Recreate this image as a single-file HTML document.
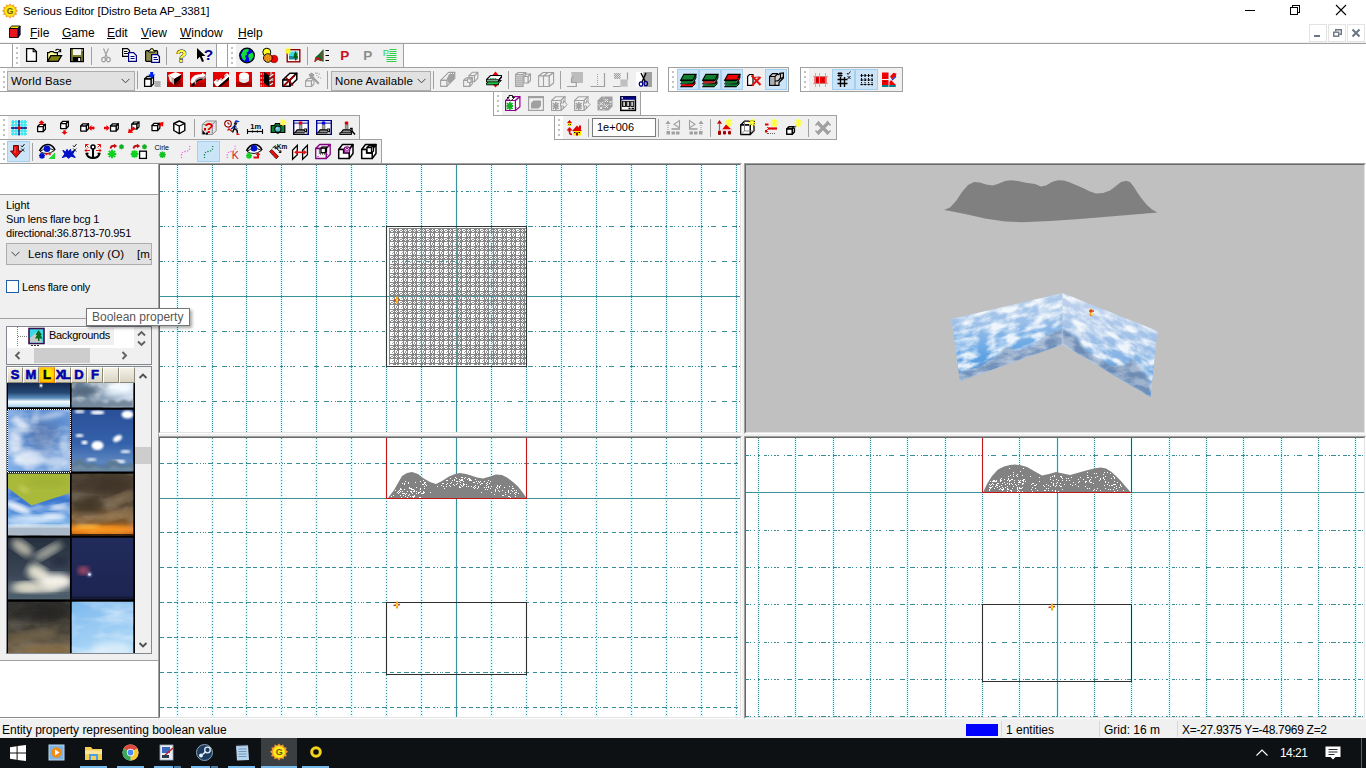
<!DOCTYPE html><html><head><meta charset="utf-8"><title>Serious Editor [Distro Beta AP_3381]</title><style>
*{box-sizing:border-box;margin:0;padding:0}
html,body{width:1366px;height:768px;overflow:hidden;background:#fff;font-family:"Liberation Sans",sans-serif;font-size:12px;color:#000}
.abs{position:absolute}
#root{position:absolute;left:0;top:0;width:1366px;height:768px;overflow:hidden;background:#fff}
.t{position:absolute;white-space:nowrap;line-height:1}
.tb{position:absolute;height:25px;border:1px solid #a0a0a0;background:#f0f0f0}
.tb .grip{position:absolute;left:0;top:0;width:8px;height:23px;background:#fff}
.tb .grip i{position:absolute;left:3px;width:2px;height:2px;background:#c2c2c2}
.btn{position:absolute;top:0;width:23px;height:23px}
.btn.on{background:#cce4f7;border:1px solid #a3cff1;top:1px;height:21px}
.btn svg{position:absolute;left:3px;top:4px;width:16px;height:16px;overflow:visible}
.btn.on svg{left:2px;top:2px}
.sep{position:absolute;top:3px;width:1px;height:18px;background:#a0a0a0}
.combo{position:absolute;background:#e1e1e1;border:1px solid #adadad}
.menu{position:absolute;top:26px;font-size:12px;line-height:14px;white-space:nowrap}
.menu u{text-decoration:underline;text-underline-offset:1px}
.vp{position:absolute;border-style:solid;border-width:2px;border-color:#696969 #fff #fff #696969;outline:0}
.vpo{position:absolute;background:#a0a0a0}
</style></head><body><div id="root">
<div class="abs" style="left:0;top:0;width:1366px;height:23px;background:#fff"></div>
<svg class="abs" style="left:2px;top:3px" width="16" height="16" viewBox="0 0 18 18"><polygon points="9,0.5 10.8,2.6 13.3,1.6 13.9,4.2 16.6,4.4 15.9,7 18,8.8 15.9,10.6 16.8,13.2 14.1,13.5 13.5,16.2 10.9,15.3 9,17.5 7.1,15.3 4.5,16.2 3.9,13.5 1.2,13.2 2.1,10.6 0,8.8 2.1,7 1.4,4.4 4.1,4.2 4.7,1.6 7.2,2.6" fill="#f29a2e"/><circle cx="9" cy="9" r="6.2" fill="#ffe818"/><circle cx="9" cy="9" r="6.2" fill="none" stroke="#f7c21a" stroke-width="1"/><text x="5.400" y="12.300" font-family="Liberation Sans, sans-serif" font-size="9.500" font-weight="bold" fill="#6b5a10">G</text></svg>
<div class="t" style="left:23px;top:6px;font-size:11.5px;letter-spacing:-0.06px">Serious Editor [Distro Beta AP_3381]</div>
<svg class="abs" style="left:1230px;top:0" width="136" height="23" viewBox="0 0 136 23" shape-rendering="crispEdges"><rect x="15" y="10" width="10" height="1" fill="#000"/><rect x="60.5" y="7.5" width="7" height="7" fill="none" stroke="#000" stroke-width="1"/><path d="M62.5 7.5 V5.5 H69.5 V12.5 H67.5" fill="none" stroke="#000" stroke-width="1"/><path d="M106 5 L116 15 M116 5 L106 15" stroke="#000" stroke-width="1.1" shape-rendering="geometricPrecision"/></svg>
<svg class="abs" style="left:9px;top:25px" width="12" height="14" viewBox="0 0 14 16"><polygon points="0.5,4 3,1 13,1 10.5,4" fill="#f5e400" stroke="#000" stroke-width="1"/><polygon points="10.5,4 13,1 13,11.5 10.5,14.5" fill="#0000c8" stroke="#000" stroke-width="1"/><rect x="0.5" y="4" width="10" height="10.5" fill="#e8141c" stroke="#000" stroke-width="1"/></svg>
<div class="menu" style="left:30px"><u>F</u>ile</div>
<div class="menu" style="left:62px"><u>G</u>ame</div>
<div class="menu" style="left:107px"><u>E</u>dit</div>
<div class="menu" style="left:141px"><u>V</u>iew</div>
<div class="menu" style="left:180px"><u>W</u>indow</div>
<div class="menu" style="left:238px"><u>H</u>elp</div>
<svg class="abs" style="left:1309px;top:24px" width="57" height="18" viewBox="0 0 57 18"><g fill="#fff" stroke="#e3e3e3"><rect x="0.5" y="0.5" width="17" height="17"/><rect x="19.5" y="0.5" width="17" height="17"/><rect x="38.5" y="0.5" width="17" height="17"/></g><rect x="5" y="11" width="6" height="2" fill="#6b7585"/><g fill="none" stroke="#6b7585" stroke-width="1.4"><rect x="24.7" y="8.2" width="5" height="4"/><path d="M26.7 7.5 V5.7 H32.3 V10.2 H30.4"/></g><path d="M43.5 5.5 L50.5 12.5 M50.5 5.5 L43.5 12.5" stroke="#6b7585" stroke-width="2"/></svg>
<div class="abs" style="left:0;top:42px;width:1366px;height:1px;background:#f0f0f0"></div>
<div class="abs" style="left:0;top:43px;width:1366px;height:1px;background:#a0a0a0"></div>
<div class="tb" style="left:12px;top:43px;width:205px"><div class="grip" style="width:7px"><i style="top:3px"></i><i style="top:8px"></i><i style="top:13px"></i><i style="top:18px"></i></div><div class="btn" style="left:7px;width:23px"><svg viewBox="0 0 16 16"><path d="M3.600 0.600 H10.400 L13.400 3.600 V13.400 H3.600 Z" fill="#fff" stroke="#000" stroke-width="1.300"/><path d="M10.200 0.600 V3.800 H13.400" fill="none" stroke="#000" stroke-width="1.100"/></svg></div><div class="btn" style="left:30px;width:23px"><svg viewBox="0 0 16 16"><path d="M9.500 2.500 q2.500 -2.600 4.700 0.300" stroke="#000" fill="none" stroke-width="1.100"/><path d="M14.600 1 V3.800 H12" stroke="#000" fill="none" stroke-width="1.100"/><path d="M1.600 13 V4.600 H3.200 L4.200 3.600 H7.200 L8.200 4.600 H11.400 V7.500" fill="#ffff9c" stroke="#000" stroke-width="1.200"/><path d="M1.600 13.400 L4.800 7.600 H15.600 L12.200 13.400 Z" fill="#808010" stroke="#000" stroke-width="1.200"/></svg></div><div class="btn" style="left:53px;width:23px"><svg viewBox="0 0 16 16"><rect x="1.600" y="0.600" width="12.800" height="13" fill="#80802c" stroke="#000" stroke-width="1.200"/><rect x="4" y="1.200" width="8" height="5.800" fill="#f4f4f4"/><rect x="3.800" y="9" width="8.400" height="4.600" fill="#000"/><rect x="9.200" y="10" width="2" height="3" fill="#fff"/><rect x="12.600" y="1.600" width="1" height="1.200" fill="#fff"/></svg></div><div class="sep" style="left:78px"></div><div class="btn" style="left:82px;width:23px"><svg viewBox="0 0 16 16"><g fill="none" stroke="#a0a0a0" stroke-width="1.200"><path d="M5.500 0.500 L9.300 9.500 M10.500 0.500 L6.700 9.500"/><ellipse cx="5.600" cy="11.600" rx="1.900" ry="2.200"/><ellipse cx="10.400" cy="11.600" rx="1.900" ry="2.200"/></g></svg></div><div class="btn" style="left:105px;width:23px"><svg viewBox="0 0 16 16"><path d="M1.600 0.600 H6.500 L8.500 2.600 V8.400 H1.600Z" fill="#fff" stroke="#000" stroke-width="1.200"/><path d="M3 3.500h3.500M3 5.500h4" stroke="#000"/><path d="M7.600 4.600 H12.500 L15.400 7.500 V13.400 H7.600Z" fill="#fff" stroke="#000080" stroke-width="1.200"/><path d="M9.500 8.500h4M9.500 10.500h4" stroke="#000080"/></svg></div><div class="btn" style="left:128px;width:23px"><svg viewBox="0 0 16 16"><rect x="1.600" y="2.600" width="12" height="10.800" rx="1" fill="#8c8c4c" stroke="#000" stroke-width="1.200"/><path d="M4.500 4 V2.500 H6 L6.600 0.800 H9 L9.600 2.500 H11 V4Z" fill="#ffff9c" stroke="#000" stroke-width="1"/><path d="M7.600 6.600 H13.500 L15.400 8.500 V14.400 H7.600Z" fill="#fff" stroke="#000080" stroke-width="1.300"/><path d="M9.500 9.500h3.500M9.500 11.500h4.500" stroke="#000080" stroke-width="1.200"/></svg></div><div class="sep" style="left:153px"></div><div class="btn" style="left:157px;width:23px"><svg viewBox="0 0 16 16"><text x="3.200" y="13.600" font-family="Liberation Sans, sans-serif" font-size="17" font-weight="bold" fill="#ffff40" stroke="#000" stroke-width="0.900" paint-order="stroke">?</text></svg></div><div class="btn" style="left:180px;width:23px"><svg viewBox="0 0 16 16"><path d="M1 0 V11.500 L3.800 8.800 L6 14 L8 13.200 L5.700 8 H9.500Z" fill="#000"/><text x="7.800" y="12.400" font-family="Liberation Sans, sans-serif" font-size="15.500" font-weight="bold" fill="#000090">?</text></svg></div></div>
<div class="tb" style="left:227px;top:43px;width:177px"><div class="grip" style="width:8px"><i style="top:3px"></i><i style="top:8px"></i><i style="top:13px"></i><i style="top:18px"></i></div><div class="btn" style="left:8px;width:23px"><svg viewBox="0 0 16 16"><circle cx="8" cy="7.500" r="7.300" fill="#0000e8" stroke="#000" stroke-width="1.200"/><path d="M4.500 2 Q7.500 0.500 10 1.500 L9 4 L7.500 4.500 L8 6.500 L6 8 L7 10.500 L5.500 13 L3 10 L2 6.500 Z" fill="#10e030"/><path d="M10 6 L13.500 4.500 L14.800 8 L12.500 12 L10.500 13.500 L10 10 L9 8 Z" fill="#10e030"/></svg></div><div class="btn" style="left:31px;width:23px"><svg viewBox="0 0 16 16"><circle cx="4.800" cy="4.200" r="4" fill="#ffff20" stroke="#000" stroke-width="1"/><circle cx="12" cy="11" r="3.800" fill="#f00000" stroke="#600" stroke-width="0.6"/><circle cx="5.800" cy="10" r="4.300" fill="#f8a020" stroke="#000" stroke-width="0.900"/><path d="M3 8h6M2.500 10h7M3 12h6" stroke="#e84010" stroke-width="1" stroke-dasharray="1 1"/></svg></div><div class="btn" style="left:54px;width:23px"><svg viewBox="0 0 16 16"><rect x="2.200" y="1.700" width="12.600" height="12.100" fill="#fff" stroke="#900000" stroke-width="1.400"/><rect x="4" y="3.500" width="9" height="4.500" fill="#40d8e8"/><rect x="4" y="8" width="9" height="3.500" fill="#208890"/><polygon points="10.500,3 8.500,7.500 9.500,7.500 8.300,10 10,10 10,12 11.200,12 11.200,10 12.800,10 11.600,7.500 12.600,7.500" fill="#006000"/><rect x="10" y="11" width="1.400" height="1.500" fill="#c00000"/><path d="M3 -0.500v7M-0.500 3h7M0.600 0.600l4.800 4.800M5.400 0.600l-4.800 4.800" stroke="#ffff20" stroke-width="1.200"/></svg></div><div class="sep" style="left:79px"></div><div class="btn" style="left:83px;width:23px"><svg viewBox="0 0 16 16"><polygon points="1,9.500 5,6 9.500,1 9.500,14 5,11.500 2,13" fill="#007030"/><polygon points="6,6 9.500,2 9.500,13.500 7,11" fill="#805030" opacity="0.7"/><path d="M1 14 Q1.500 9.500 4 10 Q5 12.500 7.500 12.500" stroke="#d01010" stroke-width="1.500" fill="none"/><path d="M11.500 2.500h3.500M11.500 7.500h3.500M11.500 12.500h3.500" stroke="#000" stroke-width="1.100"/></svg></div><div class="btn" style="left:106px;width:23px"><svg viewBox="0 0 16 16"><text x="3.300" y="12" font-family="Liberation Sans, sans-serif" font-size="13.500" font-weight="bold" fill="#c81018">P</text></svg></div><div class="btn" style="left:129px;width:23px"><svg viewBox="0 0 16 16"><text x="3.300" y="12" font-family="Liberation Sans, sans-serif" font-size="13.500" font-weight="bold" fill="#8c8c8c">P</text></svg></div><div class="btn" style="left:152px;width:23px"><svg viewBox="0 0 16 16"><text x="-0.300" y="8.200" font-family="Liberation Sans, sans-serif" font-size="9.500" fill="#30d048">P</text><path d="M6.500 1.500h7M6.500 3.500h7M6.500 5.500h7M3.500 7.500h10M3.500 9.500h10M3.500 11.500h10M3.500 13.500h10" stroke="#30d048" stroke-width="1.200"/></svg></div></div>
<div class="tb" style="left:-1px;top:67px;width:659px"><div class="grip" style="width:7px"><i style="top:3px"></i><i style="top:8px"></i><i style="top:13px"></i><i style="top:18px"></i></div><div class="combo" style="left:7px;top:3px;width:128px;height:20px"><span class="t" style="left:3px;top:4px;font-size:11.5px;letter-spacing:0.15px">World Base</span><svg class="abs" style="right:4px;top:6px" width="9" height="6" viewBox="0 0 9 6"><path d="M0.5 0.8 L4.5 4.8 L8.5 0.8" fill="none" stroke="#404040" stroke-width="1"/></svg></div><div class="sep" style="left:137px"></div><div class="btn" style="left:141px;width:23px"><svg viewBox="0 0 16 16"><g fill="#fff" stroke="#000" stroke-width="1.3" stroke-linejoin="round"><polygon points="0.6,7 3.1,4.5 9.5,4.5 7.0,7"/><polygon points="7.0,7 9.5,4.5 9.5,11.9 7.0,14.4"/><rect x="0.6" y="7" width="6.4" height="7.4"/></g><polygon points="6.200,0 9.200,0 9.200,2.600 11.200,2.600 7.700,6.400 4.200,2.600 6.200,2.600" fill="#0020f0"/><rect x="10.500" y="9" width="6" height="6" fill="#d0d0d0"/><path d="M10.500 9.500h6M10.500 11.500h6M10.500 13.500h6" stroke="#909090" stroke-dasharray="1 1"/><path d="M11.500 10.500h5M11.500 12.500h5M11.500 14.500h5" stroke="#909090" stroke-dasharray="1 1"/></svg></div><div class="btn" style="left:164px;width:23px"><svg viewBox="0 0 16 16"><rect x="0" y="0" width="16" height="15" fill="#e40000"/><rect x="0" y="10.500" width="16" height="4.500" fill="#b00000"/><polygon points="1.200,3 8.500,0 14.800,2.600 7.200,7" fill="#fff"/><polygon points="1.200,3 7.200,7 7.200,13 3,9" fill="#b0b0b0"/><polygon points="1.200,3 4.500,5.200 4.500,10.500 3,9" fill="#f0f0f0"/><polygon points="7.200,7 14.800,2.600 13,7.500 7.200,13" fill="#000"/><polygon points="7.200,13 13,7.500 14,10 9,14.500" fill="#800000"/></svg></div><div class="btn" style="left:187px;width:23px"><svg viewBox="0 0 16 16"><rect x="0" y="0" width="16" height="15" fill="#e40000"/><rect x="0" y="10.500" width="16" height="4.500" fill="#b00000"/><path d="M0.500 10 Q1 3.500 8 2.500 L12 2 L12 0.500 L16 3 L12.500 6 L12.500 4.800 Q6 5 4.500 10 L2 12Z" fill="#fff"/><path d="M2 12 L4.500 10 L5 13 L2.500 14.500Z" fill="#000"/><path d="M4.500 10 Q6 5 12.500 4.800 L12.500 6 L16 3 V5.500 L12.500 8 Q7 8 5 13Z" fill="#a8a8a8"/><path d="M6 9 Q8 6.500 12.500 6.500 V8 Q8 8 6.500 11Z" fill="#000"/></svg></div><div class="btn" style="left:210px;width:23px"><svg viewBox="0 0 16 16"><rect x="0" y="0" width="16" height="15" fill="#e40000"/><rect x="0" y="10.500" width="16" height="4.500" fill="#b00000"/><polygon points="0.500,10 4,7 5.500,8.500 8,6 9.500,7.500 12,5 11,3.500 14,1 16,3 16,5 5,14.500 3,14" fill="#fff"/><polygon points="4,7 5.500,8.500 5,10 3,9" fill="#b0b0b0"/><polygon points="8,6 9.500,7.500 9,9 7,8" fill="#b0b0b0"/><polygon points="12,5 11,3.500 13,2 14,3.500" fill="#b0b0b0"/><polygon points="5,14.500 16,5 16,8 7,15" fill="#000"/></svg></div><div class="btn" style="left:233px;width:23px"><svg viewBox="0 0 16 16"><rect x="0" y="0" width="16" height="15" fill="#e40000"/><rect x="0" y="10.500" width="16" height="4.500" fill="#b00000"/><path d="M3 4 A5 3.600 0 0 1 13 4 V7.500 A5 3.600 0 0 1 3 7.500Z" fill="#d8d8d8"/><ellipse cx="8" cy="4" rx="5" ry="3.600" fill="#fff"/><ellipse cx="8" cy="11.500" rx="5" ry="2" fill="#900000"/><path d="M3 7.500 A5 3.600 0 0 0 13 7.500 V4.500 A5 3.600 0 0 1 3 4.500" fill="#e8e8e8"/></svg></div><div class="btn" style="left:256px;width:23px"><svg viewBox="0 0 16 16"><rect x="1" y="0" width="15" height="15" fill="#e40000"/><polygon points="5,0 10,3.500 10,15 5,11" fill="#000"/><path d="M1.500 2h3M1.500 6h3M1.500 10h3M1.500 13.500h3" stroke="#b0b0b0" stroke-width="2" stroke-dasharray="1.500 1"/><polygon points="10,3.500 15,0.500 15,5 12,7 15,9 15,13 10,15" fill="#901010"/><path d="M10.500 5 L14.500 2 M10.500 9 L13.500 7 M11 13 L14 11" stroke="#f0f0f0" stroke-width="1.400"/><path d="M12 0v3M13.500 6v3" stroke="#b0b0b0" stroke-width="1.500"/></svg></div><div class="btn" style="left:279px;width:23px"><svg viewBox="0 0 16 16"><g fill="#fff" stroke="#000" stroke-width="1.5" stroke-linejoin="round"><polygon points="0.8,8 7.8,1.2000000000000002 14.8,1.2000000000000002 7.8,8"/><polygon points="7.8,8 14.8,1.2000000000000002 14.8,7.500000000000001 7.8,14.3"/><rect x="0.8" y="8" width="7" height="6.3"/></g><path d="M1.500 14 L12.500 3.500" stroke="#900000" stroke-width="1.800"/><path d="M4 5.500 L11 13.500" stroke="#900000" stroke-width="1.500"/></svg></div><div class="btn" style="left:302px;width:23px"><svg viewBox="0 0 16 16"><g fill="#f0f0f0" stroke="#a0a0a0" stroke-width="1.1" stroke-linejoin="round"><polygon points="0.6,9 3.1,6.5 8.899999999999999,6.5 6.3999999999999995,9"/><polygon points="6.3999999999999995,9 8.899999999999999,6.5 8.899999999999999,12.0 6.3999999999999995,14.5"/><rect x="0.6" y="9" width="5.8" height="5.5"/></g><path d="M3.500 2.500 L6.500 0.500 L9.500 2.500 L8.500 4.500 L14.500 11 L13 12.500 L6.800 6 L5.500 6.500Z" fill="#a0a0a0"/><path d="M10 1h1M12 0.500v1.500M13.500 2h1.500M11.500 3.500h1M13.500 4.500v1.500M15 6h1" stroke="#a0a0a0" stroke-width="1.200"/></svg></div><div class="sep" style="left:327px"></div><div class="combo" style="left:331px;top:3px;width:100px;height:20px"><span class="t" style="left:3px;top:4px;font-size:11.5px;letter-spacing:0.1px">None Available</span><svg class="abs" style="right:4px;top:6px" width="9" height="6" viewBox="0 0 9 6"><path d="M0.5 0.8 L4.5 4.8 L8.5 0.8" fill="none" stroke="#404040" stroke-width="1"/></svg></div><div class="sep" style="left:433px"></div><div class="btn" style="left:437px;width:23px"><svg viewBox="0 0 16 16"><g fill="#f0f0f0" stroke="#a0a0a0" stroke-width="1.1" stroke-linejoin="round"><polygon points="0.6,8.4 8.6,0.40000000000000036 14.8,0.40000000000000036 6.8,8.4"/><polygon points="6.8,8.4 14.8,0.40000000000000036 14.8,6.4 6.8,14.4"/><rect x="0.6" y="8.4" width="6.2" height="6"/></g><polygon points="6.800,6.500 9.500,1.500 14.800,0.400 14.800,6.400 9,12" fill="#a0a0a0"/><path d="M9 1.500h1M11 1.500h1M13 1.500h1" stroke="#f0f0f0"/></svg></div><div class="btn" style="left:460px;width:23px"><svg viewBox="0 0 16 16"><g fill="#f0f0f0" stroke="#a0a0a0" stroke-width="1.1" stroke-linejoin="round"><polygon points="0.6,8.4 3.1,5.9 9.3,5.9 6.8,8.4"/><polygon points="6.8,8.4 9.3,5.9 9.3,11.9 6.8,14.4"/><rect x="0.6" y="8.4" width="6.2" height="6"/></g><g fill="#f0f0f0" stroke="#a0a0a0" stroke-width="1.1" stroke-linejoin="round"><polygon points="6,3.6 9.3,0.30000000000000027 14.8,0.30000000000000027 11.5,3.6"/><polygon points="11.5,3.6 14.8,0.30000000000000027 14.8,6.3 11.5,9.6"/><rect x="6" y="3.6" width="5.5" height="6"/></g><g fill="#f0f0f0" stroke="#a0a0a0" stroke-width="1" stroke-linejoin="round"><polygon points="4.5,7 6.0,5.5 9.5,5.5 8.0,7"/><polygon points="8.0,7 9.5,5.5 9.5,9.0 8.0,10.5"/><rect x="4.5" y="7" width="3.5" height="3.5"/></g></svg></div><div class="btn" style="left:483px;width:23px"><svg viewBox="0 0 16 16"><polygon points="9.500,-0.500 12.500,3 6.500,3" fill="#f00000"/><rect x="8.300" y="2" width="2.400" height="2.500" fill="#f00000"/><polygon points="9.500,15.500 12.500,12 6.500,12" fill="#f00000"/><rect x="8.300" y="10.500" width="2.400" height="2.500" fill="#f00000"/><polygon points="0.600,11 4,8.500 15.400,8.500 12.500,11 12.500,12.800 0.600,12.800" fill="#20c040" stroke="#000" stroke-width="0.900"/><polygon points="0.600,7.500 4.500,3.500 15.400,3.500 15.400,5.500 12.500,8.500 12.500,9.800 0.600,9.800" fill="#fff" stroke="#000" stroke-width="1.100"/><path d="M1 7.700 H12.500 L15.400 4.500" fill="none" stroke="#000" stroke-width="0.900"/><path d="M4 6.500h7" stroke="#20a040" stroke-width="1.200" stroke-dasharray="1.500 0.800"/><path d="M1.500 9h10.500" stroke="#208040" stroke-width="1"/></svg></div><div class="sep" style="left:508px"></div><div class="btn" style="left:512px;width:23px"><svg viewBox="0 0 16 16"><rect x="0.600" y="2.500" width="7.500" height="12" fill="#d4d4d4" stroke="#a0a0a0" stroke-width="1.100"/><path d="M0.600 2.500 L3 0.500 H10.500 L8 2.500 M10.500 0.500 V3" fill="none" stroke="#a0a0a0" stroke-width="1.100"/><path d="M2 4v10M4 4v10M6 4v10" stroke="#a0a0a0" stroke-dasharray="1 1"/><path d="M3 3.500v10M5 3.500v10M7 3.500v10" stroke="#a0a0a0" stroke-dasharray="1 1" stroke-dashoffset="1"/><g fill="#f0f0f0" stroke="#a0a0a0" stroke-width="1.1" stroke-linejoin="round"><polygon points="9,4.5 11.5,2.0 15.5,2.0 13,4.5"/><polygon points="13,4.5 15.5,2.0 15.5,8.5 13,11.0"/><rect x="9" y="4.5" width="4" height="6.5"/></g></svg></div><div class="btn" style="left:535px;width:23px"><svg viewBox="0 0 16 16"><g fill="#f0f0f0" stroke="#a0a0a0" stroke-width="1.1" stroke-linejoin="round"><polygon points="0.6,4 5.1,0.5 15.6,0.5 11.1,4"/><polygon points="11.1,4 15.6,0.5 15.6,11.0 11.1,14.5"/><rect x="0.6" y="4" width="10.5" height="10.5"/></g><path d="M5.500 4 V14.500 M5.500 4 L10 0.500" stroke="#a0a0a0" stroke-width="1.100"/></svg></div><div class="sep" style="left:560px"></div><div class="btn" style="left:564px;width:23px"><svg viewBox="0 0 16 16"><rect x="4.5" y="0" width="11.5" height="11" fill="#d8d8d8"/><path d="M4.5 0.5h11.5" stroke="#a0a0a0" stroke-dasharray="1 1"/><path d="M5.5 1.5h10.5" stroke="#a0a0a0" stroke-dasharray="1 1"/><path d="M4.5 2.5h11.5" stroke="#a0a0a0" stroke-dasharray="1 1"/><path d="M5.5 3.5h10.5" stroke="#a0a0a0" stroke-dasharray="1 1"/><path d="M4.5 4.5h11.5" stroke="#a0a0a0" stroke-dasharray="1 1"/><path d="M5.5 5.5h10.5" stroke="#a0a0a0" stroke-dasharray="1 1"/><path d="M4.5 6.5h11.5" stroke="#a0a0a0" stroke-dasharray="1 1"/><path d="M5.5 7.5h10.5" stroke="#a0a0a0" stroke-dasharray="1 1"/><path d="M4.5 8.5h11.5" stroke="#a0a0a0" stroke-dasharray="1 1"/><path d="M5.5 9.5h10.5" stroke="#a0a0a0" stroke-dasharray="1 1"/><path d="M4.5 10.5h11.5" stroke="#a0a0a0" stroke-dasharray="1 1"/><path d="M0 14.500 H9.300 V10.500 H4.500 V6.500 L6.500 5" fill="none" stroke="#a0a0a0" stroke-width="1.200"/></svg></div><div class="btn" style="left:587px;width:23px"><svg viewBox="0 0 16 16"><path d="M0.500 14.500 H14.500 V1" fill="none" stroke="#a0a0a0" stroke-width="1.200"/><path d="M7.500 2 V13" stroke="#a0a0a0" stroke-dasharray="1 1"/></svg></div><div class="btn" style="left:610px;width:23px"><svg viewBox="0 0 16 16"><rect x="1" y="1" width="6.5" height="6" fill="#d8d8d8"/><path d="M1 1.5h6.5" stroke="#a0a0a0" stroke-dasharray="1 1"/><path d="M2 2.5h5.5" stroke="#a0a0a0" stroke-dasharray="1 1"/><path d="M1 3.5h6.5" stroke="#a0a0a0" stroke-dasharray="1 1"/><path d="M2 4.5h5.5" stroke="#a0a0a0" stroke-dasharray="1 1"/><path d="M1 5.5h6.5" stroke="#a0a0a0" stroke-dasharray="1 1"/><path d="M2 6.5h5.5" stroke="#a0a0a0" stroke-dasharray="1 1"/><rect x="7.5" y="7.5" width="7" height="7" fill="#d8d8d8"/><path d="M7.5 8.0h7" stroke="#a0a0a0" stroke-dasharray="1 1"/><path d="M8.5 9.0h6" stroke="#a0a0a0" stroke-dasharray="1 1"/><path d="M7.5 10.0h7" stroke="#a0a0a0" stroke-dasharray="1 1"/><path d="M8.5 11.0h6" stroke="#a0a0a0" stroke-dasharray="1 1"/><path d="M7.5 12.0h7" stroke="#a0a0a0" stroke-dasharray="1 1"/><path d="M8.5 13.0h6" stroke="#a0a0a0" stroke-dasharray="1 1"/><path d="M7.5 14.0h7" stroke="#a0a0a0" stroke-dasharray="1 1"/><path d="M0 14.500 H7.500 M14.500 0.500 V7.500" fill="none" stroke="#a0a0a0" stroke-width="1.200"/></svg></div><div class="btn" style="left:633px;width:23px"><svg viewBox="0 0 16 16"><rect x="0" y="0" width="7.500" height="15" fill="#fff"/><rect x="7.500" y="0" width="8.500" height="15" fill="#a0a0a0"/><path d="M5 1 L9.500 10 M10 1 L6 10" stroke="#000" stroke-width="1.400" fill="none"/><ellipse cx="5" cy="12" rx="1.700" ry="2.200" fill="none" stroke="#000080" stroke-width="1.300"/><ellipse cx="9.800" cy="11.500" rx="1.700" ry="2.200" fill="none" stroke="#000080" stroke-width="1.300"/></svg></div></div>
<div class="tb" style="left:668px;top:67px;width:121px"><div class="grip" style="width:8px"><i style="top:3px"></i><i style="top:8px"></i><i style="top:13px"></i><i style="top:18px"></i></div><div class="btn on" style="left:8px;width:22px"><svg viewBox="0 0 16 16"><g transform="translate(8 8.600) scale(1.170 1.200) translate(-8 -8.700)"><polygon points="2,13.500 12,13.500 14,11.500 14,10" fill="#f00000" stroke="#000" stroke-width="0.800"/><rect x="2" y="11.700" width="10" height="1.800" fill="#f00000"/><path d="M1.300 11.300h11 M1.300 13.800h10.500" stroke="#000" stroke-width="0.900"/><rect x="2" y="9" width="10" height="2" fill="#108030"/><path d="M1.300 8.700h11" stroke="#000" stroke-width="0.900"/><path d="M12.300 11.300 L14.300 9" stroke="#000" stroke-width="0.800"/><polygon points="1.800,8.300 4.500,3.500 14.800,3.500 12.300,8.300" fill="#108030" stroke="#000" stroke-width="0.900"/><path d="M12.300 8.300 L14.800 3.500 V6.500 L12.300 11" fill="#108030" stroke="#000" stroke-width="0.800"/></g></svg></div><div class="btn on" style="left:30px;width:22px"><svg viewBox="0 0 16 16"><g transform="translate(8 8.600) scale(1.170 1.200) translate(-8 -8.700)"><polygon points="2,13.500 12,13.500 14,11.500 14,10" fill="#108030" stroke="#000" stroke-width="0.800"/><rect x="2" y="11.700" width="10" height="1.800" fill="#108030"/><path d="M1.300 11.300h11 M1.300 13.800h10.500" stroke="#000" stroke-width="0.900"/><rect x="2" y="9" width="10" height="2" fill="#c02828"/><path d="M1.300 8.700h11" stroke="#000" stroke-width="0.900"/><path d="M12.300 11.300 L14.300 9" stroke="#000" stroke-width="0.800"/><polygon points="1.800,8.300 4.500,3.500 14.800,3.500 12.300,8.300" fill="#108030" stroke="#000" stroke-width="0.900"/><path d="M12.300 8.300 L14.800 3.500 V6.500 L12.300 11" fill="#108030" stroke="#000" stroke-width="0.800"/></g></svg></div><div class="btn on" style="left:52px;width:22px"><svg viewBox="0 0 16 16"><g transform="translate(8 8.600) scale(1.170 1.200) translate(-8 -8.700)"><polygon points="2,13.500 12,13.500 14,11.500 14,10" fill="#108030" stroke="#000" stroke-width="0.800"/><rect x="2" y="11.700" width="10" height="1.800" fill="#108030"/><path d="M1.300 11.300h11 M1.300 13.800h10.500" stroke="#000" stroke-width="0.900"/><rect x="2" y="9" width="10" height="2" fill="#108030"/><path d="M1.300 8.700h11" stroke="#000" stroke-width="0.900"/><path d="M12.300 11.300 L14.300 9" stroke="#000" stroke-width="0.800"/><polygon points="1.800,8.300 4.500,3.500 14.800,3.500 12.300,8.300" fill="#f00000" stroke="#000" stroke-width="0.900"/><path d="M12.300 8.300 L14.800 3.500 V6.500 L12.300 11" fill="#f00000" stroke="#000" stroke-width="0.800"/></g></svg></div><div class="btn" style="left:74px;width:22px"><svg viewBox="0 0 16 16"><path d="M1.600 4.500 L3.500 2.500 H7 V13.400 H1.600Z" fill="#fff" stroke="#000" stroke-width="1.200"/><path d="M5.500 3.500 L14.500 13 M14.500 5 L6 13.500" stroke="#e01010" stroke-width="2"/><path d="M7 5.500l6 -0.500" stroke="#e01010" stroke-width="1"/></svg></div><div class="btn on" style="left:96px;width:22px"><svg viewBox="0 0 16 16"><path d="M1.600 4.500 L4.500 1.600 H9.500 Q10 4 12 1.200 L15.400 0.800 V6 L11 10.500 V13.400 H1.600Z" fill="#d4d4d4" stroke="#000" stroke-width="1.200"/><path d="M1.600 4.500 H7 V13.400 M7 4.500 L9.800 1.600 M7 9 Q11.500 9.500 12.500 5.500 Q13 7.500 15 5 M12.500 1.500v4" fill="none" stroke="#000" stroke-width="1.100"/><path d="M2.500 6h4M2.500 8h4M2.500 10h4M2.500 12h4" stroke="#808080" stroke-dasharray="1 1"/><path d="M3.500 7h3M3.500 9h3M3.500 11h3" stroke="#808080" stroke-dasharray="1 1"/></svg></div></div>
<div class="tb" style="left:800px;top:67px;width:103px"><div class="grip" style="width:8px"><i style="top:3px"></i><i style="top:8px"></i><i style="top:13px"></i><i style="top:18px"></i></div><div class="btn" style="left:8px;width:23px"><svg viewBox="0 0 16 16"><rect x="2.500" y="4" width="4.500" height="8" fill="#f00000"/><rect x="8" y="4" width="6.500" height="8" fill="#f00000"/><path d="M1 4.500h15M1 11.500h15M3.500 1v14M7.500 1v14M13.500 1v14" stroke="#c89898" stroke-width="0.800"/><rect x="4.500" y="6" width="1" height="4" fill="#900000"/><rect x="10.500" y="7" width="1" height="2" fill="#900000"/></svg></div><div class="btn on" style="left:31px;width:23px"><svg viewBox="0 0 16 16"><path d="M2.500 7.500h10M2.500 11.500h10M5.500 5v10M9.500 5v10" stroke="#000" stroke-width="1.400"/><path d="M2.500 1.500h5M2.500 3.500h5M4 0v5M6 0v5" stroke="#000" stroke-width="1"/><path d="M12 1 L13 2.500 L15.500 -0.500 M12.500 4 L15.500 7 M15.500 4 L12.500 7" stroke="#000" stroke-width="0.900" fill="none"/></svg></div><div class="btn on" style="left:54px;width:23px"><svg viewBox="0 0 16 16"><path d="M2.500 3.500h12M2.500 8h12M2.500 12.500h12" stroke="#000" stroke-width="1" stroke-dasharray="1 1"/><path d="M3.500 2v12M7 2v12M10.500 2v12M14 2v12" stroke="#000" stroke-width="1" stroke-dasharray="1 1"/><path d="M3 3.500h1.500M6.500 3.500h1.500M10 3.500h1.500M13.500 3.500h1.500M3 8h1.500M6.500 8h1.500M10 8h1.500M13.500 8h1.500M3 12.500h1.500M6.500 12.500h1.500M10 12.500h1.500M13.500 12.500h1.500" stroke="#000" stroke-width="1.400"/></svg></div><div class="btn" style="left:77px;width:23px"><svg viewBox="0 0 16 16"><rect x="1" y="0.500" width="6.500" height="6.500" fill="#f00000"/><rect x="1" y="8" width="6.500" height="5" fill="#f00000"/><rect x="1" y="13" width="6.500" height="2" fill="#008088"/><polygon points="8.500,15 8.500,10 10,8 12,10 14.500,12.500 14.500,15" fill="#f00000"/><rect x="8.500" y="13" width="6" height="2" fill="#008088"/><polygon points="9,4.500 12.500,0.800 15.500,1.800 15,3.500 11.500,7" fill="#f00000"/><polygon points="9,4.500 11.500,7 15,3.500 15.200,5 11.500,8.500" fill="#0030c0"/><rect x="3.500" y="5" width="1.500" height="1" fill="#800000"/><rect x="3.500" y="9" width="1.500" height="1" fill="#800000"/></svg></div></div>
<div class="tb" style="left:493px;top:91px;width:148px"><div class="grip" style="width:8px"><i style="top:3px"></i><i style="top:8px"></i><i style="top:13px"></i><i style="top:18px"></i></div><div class="btn" style="left:8px;width:23px"><svg viewBox="0 0 16 16"><g fill="#fff" stroke="#900090" stroke-width="1.2" stroke-linejoin="round"><polygon points="0.6,4.5 5.1,0.7000000000000002 14.9,0.7000000000000002 10.4,4.5"/><polygon points="10.4,4.5 14.9,0.7000000000000002 14.9,10.7 10.4,14.5"/><rect x="0.6" y="4.5" width="9.8" height="10"/></g><polygon points="4,-0.500 7.500,-0.500 7.500,1.500 9.500,1.500 5.800,5 2,1.500 4,1.500" fill="#fff" stroke="#000" stroke-width="0.900"/><path d="M2 7l5.500 6M7.500 7l-5.500 6M4.800 6v8M1.500 10h6.500" stroke="#10b020" stroke-width="1.800"/><circle cx="11" cy="11.500" r="0.600" fill="#900090"/></svg></div><div class="btn" style="left:31px;width:23px"><svg viewBox="0 0 16 16"><rect x="0.600" y="0.600" width="14.800" height="13.800" fill="none" stroke="#a0a0a0" stroke-width="1.200"/><path d="M1 1.500h14" stroke="#a0a0a0" stroke-width="1.400"/><polygon points="3,7 5.500,4.500 13,4.500 13,10 10.500,12.500 3,12.500" fill="#a0a0a0"/></svg></div><div class="btn" style="left:54px;width:23px"><svg viewBox="0 0 16 16"><g fill="#f0f0f0" stroke="#a0a0a0" stroke-width="1.1" stroke-linejoin="round"><polygon points="0.6,4.5 4.6,0.7000000000000002 14.0,0.7000000000000002 10.0,4.5"/><polygon points="10.0,4.5 14.0,0.7000000000000002 14.0,10.7 10.0,14.5"/><rect x="0.6" y="4.5" width="9.4" height="10"/></g><path d="M2 7l5.500 6M7.500 7l-5.500 6M4.800 6v8M1.500 10h6.500" stroke="#a0a0a0" stroke-width="1.600"/><polygon points="9.500,7 12.500,7 12.500,4.500 16,8.500 12.500,12.500 12.500,10 9.500,10" fill="#f0f0f0" stroke="#a0a0a0" stroke-width="1"/></svg></div><div class="btn" style="left:77px;width:23px"><svg viewBox="0 0 16 16"><g fill="#f0f0f0" stroke="#a0a0a0" stroke-width="1.1" stroke-linejoin="round"><polygon points="0.6,4.5 4.6,0.7000000000000002 14.0,0.7000000000000002 10.0,4.5"/><polygon points="10.0,4.5 14.0,0.7000000000000002 14.0,10.7 10.0,14.5"/><rect x="0.6" y="4.5" width="9.4" height="10"/></g><path d="M2 7l5.500 6M7.500 7l-5.500 6M4.800 6v8M1.500 10h6.500" stroke="#a0a0a0" stroke-width="1.600"/><polygon points="9.500,7 12.500,7 12.500,4.500 16,8.500 12.500,12.500 12.500,10 9.500,10" fill="#f0f0f0" stroke="#a0a0a0" stroke-width="1"/></svg></div><div class="btn" style="left:100px;width:23px"><svg viewBox="0 0 16 16"><polygon points="0.500,4.500 4.500,0.500 15.500,0.500 15.500,10.500 11.500,14.500 0.500,14.500" fill="#a0a0a0"/><path d="M2.500 6l3.500 3.500M6 6l-3.500 3.500M8 3l3 3M11 3l-3 3M2.500 10.500l3 3M5.500 10.500l-3 3M8 9l3 3M11 9l-3 3M12.500 5l2 2M14.500 5l-2 2" stroke="#e8e8e8" stroke-width="1"/><path d="M7 1v13M1 8.500h14" stroke="#e0e0e0" stroke-width="0.800" stroke-dasharray="1 1"/></svg></div><div class="btn" style="left:123px;width:23px"><svg viewBox="0 0 16 16"><rect x="0.800" y="0.800" width="14.600" height="13.600" fill="#fff" stroke="#000" stroke-width="1.500"/><rect x="0.500" y="0.500" width="15.200" height="3.300" fill="#000080"/><rect x="1.500" y="1.200" width="1.500" height="1.500" fill="#fff"/><g fill="#c8c8c8" stroke="#000" stroke-width="0.900"><rect x="2.500" y="5.300" width="3" height="5.200"/><rect x="6.600" y="5.300" width="3" height="5.200"/><rect x="10.700" y="5.300" width="3" height="5.200"/></g><path d="M3.500 6.500v3M7.600 6.500v3M11.700 6.500v3" stroke="#808080" stroke-dasharray="1 1"/><path d="M8.500 12.500h2M11.500 12.500h2.500" stroke="#000" stroke-width="1.300"/></svg></div></div>
<div class="tb" style="left:-1px;top:115px;width:361px"><div class="grip" style="width:8px"><i style="top:3px"></i><i style="top:8px"></i><i style="top:13px"></i><i style="top:18px"></i></div><div class="btn" style="left:8px;width:23px"><svg viewBox="0 0 16 16"><path d="M0 2h16M0 5h16M0 11h16M0 14h16M2 0v15.500M5 0v15.500M11 0v15.500M14 0v15.500" stroke="#40e8f0" stroke-width="1.700"/><path d="M8 0v15.500M0 8h16" stroke="#000080" stroke-width="1.300"/><circle cx="8" cy="8" r="1.800" fill="#e00000"/></svg></div><div class="btn" style="left:31px;width:23px"><svg viewBox="0 0 16 16"><g fill="#fff" stroke="#000" stroke-width="1.25" stroke-linejoin="round"><polygon points="3.6,6.5 5.800000000000001,4.3 11.399999999999999,4.3 9.2,6.5"/><polygon points="9.2,6.5 11.399999999999999,4.3 11.399999999999999,9.3 9.2,11.5"/><rect x="3.6" y="6.5" width="5.6" height="5"/></g><polygon points="7.5,0.2 10.5,3.0 8.7,3.0 8.7,4.7 6.3,4.7 6.3,3.0 4.5,3.0" fill="#f00000"/></svg></div><div class="btn" style="left:54px;width:23px"><svg viewBox="0 0 16 16"><g fill="#fff" stroke="#000" stroke-width="1.25" stroke-linejoin="round"><polygon points="3.6,3.5 5.800000000000001,1.2999999999999998 11.399999999999999,1.2999999999999998 9.2,3.5"/><polygon points="9.2,3.5 11.399999999999999,1.2999999999999998 11.399999999999999,6.3 9.2,8.5"/><rect x="3.6" y="3.5" width="5.6" height="5"/></g><polygon points="7.5,14.8 10.5,12.0 8.7,12.0 8.7,10.3 6.3,10.3 6.3,12.0 4.5,12.0" fill="#f00000"/></svg></div><div class="btn" style="left:77px;width:23px"><svg viewBox="0 0 16 16"><g fill="#fff" stroke="#000" stroke-width="1.25" stroke-linejoin="round"><polygon points="0.7,6 2.9000000000000004,3.8 8.5,3.8 6.3,6"/><polygon points="6.3,6 8.5,3.8 8.5,8.8 6.3,11"/><rect x="0.7" y="6" width="5.6" height="5"/></g><polygon points="8.5,8 11.5,5 11.5,6.8 14.0,6.8 14.0,9.2 11.5,9.2 11.5,11" fill="#f00000"/><path d="M13 8h1.500" stroke="#f00000" stroke-width="2.400"/></svg></div><div class="btn" style="left:100px;width:23px"><svg viewBox="0 0 16 16"><polygon points="6.5,8 3.5,5 3.5,6.8 1.0,6.8 1.0,9.2 3.5,9.2 3.5,11" fill="#f00000"/><g fill="#fff" stroke="#000" stroke-width="1.25" stroke-linejoin="round"><polygon points="7.5,6 9.7,3.8 15.3,3.8 13.1,6"/><polygon points="13.1,6 15.3,3.8 15.3,8.8 13.1,11"/><rect x="7.5" y="6" width="5.6" height="5"/></g></svg></div><div class="btn" style="left:123px;width:23px"><svg viewBox="0 0 16 16"><g fill="#fff" stroke="#000" stroke-width="1.2" stroke-linejoin="round"><polygon points="5.8,4.2 8.0,2.0 13.0,2.0 10.8,4.2"/><polygon points="10.8,4.2 13.0,2.0 13.0,6.8 10.8,9.0"/><rect x="5.8" y="4.2" width="5" height="4.8"/></g><polygon points="2,13 2.800,8.500 4.200,9.800 7.500,6.500 9.300,8.300 6,11.500 7.200,12.800" fill="#f00000"/></svg></div><div class="btn" style="left:146px;width:23px"><svg viewBox="0 0 16 16"><g fill="#fff" stroke="#000" stroke-width="1.25" stroke-linejoin="round"><polygon points="3,5.5 5.2,3.3 10.8,3.3 8.6,5.5"/><polygon points="8.6,5.5 10.8,3.3 10.8,8.3 8.6,10.5"/><rect x="3" y="5.5" width="5.6" height="5"/></g><polygon points="14.500,1.800 14,6.800 12.600,5.500 11,7.200 9.500,5.800 11.300,4.200 10,3" fill="#f00000"/></svg></div><div class="btn" style="left:169px;width:23px"><svg viewBox="0 0 16 16"><polygon points="7.300,1 12.800,3.500 12.800,10.500 7.300,13.600 1.800,10.500 1.800,3.500" fill="#fff" stroke="#000" stroke-width="1.400" stroke-linejoin="round"/><path d="M1.800 3.500 L7.300 6 L12.800 3.500 M7.300 6 V13.600" fill="none" stroke="#000" stroke-width="1.300"/></svg></div><div class="sep" style="left:194px"></div><div class="btn" style="left:198px;width:23px"><svg viewBox="0 0 16 16"><g fill="#e4e4e4" stroke="#909090" stroke-width="1" stroke-linejoin="round"><polygon points="1.2,4.5 5.2,1.0 15.2,1.0 11.2,4.5"/><polygon points="11.2,4.5 15.2,1.0 15.2,11.0 11.2,14.5"/><rect x="1.2" y="4.5" width="10" height="10"/></g><text x="3.500" y="12.500" font-family="Liberation Sans, sans-serif" font-size="15" font-weight="bold" fill="#e00000">?</text><polygon points="1.500,14 1.500,10 5,14" fill="#000"/><rect x="3" y="8" width="2" height="2.500" fill="#d00000"/><rect x="5" y="12.500" width="2" height="2" fill="#000"/></svg></div><div class="btn" style="left:221px;width:23px"><svg viewBox="0 0 16 16"><circle cx="4" cy="3.800" r="3.300" fill="#fff" stroke="#900000" stroke-width="1.200"/><path d="M4 2V4h1.800" stroke="#900000" stroke-width="1" fill="none"/><path d="M10.500 1.500 Q12 -0.500 14 0.800 L16 1.500 L13 2.500Z" fill="#0030c0"/><circle cx="11.500" cy="3.500" r="1.600" fill="#202020"/><path d="M11 5 L10 9 L8.500 12.500 M10.500 8.500 L13 10.500 L13.500 13.500" stroke="#000" stroke-width="1.500" fill="none"/><path d="M10.800 5.500 L8.500 8 L7 9 M11.500 6 L13.500 8.500" stroke="#0020a0" stroke-width="1.300" fill="none"/><rect x="12.500" y="5.500" width="1.500" height="2.500" fill="#fff"/><path d="M3.500 10.500 L5 9 L8 11.500" stroke="#d01010" stroke-width="1.300" fill="none"/><polygon points="12.500,13 15.500,14 15.500,15 12.500,15" fill="#e01010"/></svg></div><div class="btn" style="left:244px;width:23px"><svg viewBox="0 0 16 16"><path d="M0.500 11.500H15.500" stroke="#000" stroke-width="1.200"/><path d="M0.500 9v5M15.500 9v5M5.500 10.500v2M10.500 10.500v2" stroke="#000" stroke-width="1.100"/><text x="3.300" y="9" font-family="Liberation Sans, sans-serif" font-size="7.500" font-weight="bold" fill="#000">1m</text></svg></div><div class="btn" style="left:267px;width:23px"><svg viewBox="0 0 16 16"><path d="M1.200 5.500 H4.500 L5.500 3.500 H9.500 L10.500 5.500 H14.800 V12.500 H1.200Z" fill="#108030" stroke="#000" stroke-width="1.200"/><circle cx="7.800" cy="9" r="3.600" fill="#000"/><circle cx="7.800" cy="9" r="2.600" fill="#58c0d0"/><circle cx="7" cy="8.200" r="1" fill="#a0e0e8"/><rect x="6.500" y="12.500" width="2.600" height="1.200" fill="#000"/><path d="M13 -1v7M9.500 2.500h7M10.500 0l5 5M15.500 0l-5 5" stroke="#ffff40" stroke-width="1.200"/></svg></div><div class="btn" style="left:290px;width:23px"><svg viewBox="0 0 16 16"><rect x="0.700" y="0.700" width="14.600" height="13.600" fill="#fff" stroke="#000090" stroke-width="1.400"/><path d="M1 3h14" stroke="#000090" stroke-width="1.200"/><rect x="1.400" y="1.400" width="13.200" height="1" fill="#fff"/><rect x="6.200" y="4.500" width="2.800" height="6.500" fill="#a0a0a0" stroke="#606060" stroke-width="0.600"/><rect x="5.800" y="1.500" width="3.500" height="3" rx="1" fill="#e00000"/><polygon points="1,14 4.200,9.800 11,9.800 12.500,12 12.500,14" fill="#909090" stroke="#000" stroke-width="1.200"/><rect x="1" y="12.800" width="11.500" height="1.700" fill="#b0b0b0" stroke="#000" stroke-width="0.900"/><path d="M11 9 H13.500 V13.500" stroke="#000" stroke-width="1.200" fill="none"/><rect x="11.800" y="12.300" width="2" height="1.500" fill="#fff"/></svg></div><div class="btn" style="left:313px;width:23px"><svg viewBox="0 0 16 16"><rect x="0.700" y="0.700" width="14.600" height="13.600" fill="#fff" stroke="#000090" stroke-width="1.400"/><path d="M1 3h14" stroke="#000090" stroke-width="1.200"/><rect x="1.400" y="1.400" width="13.200" height="1" fill="#fff"/><rect x="6.200" y="4.500" width="2.800" height="6.500" fill="#a0a0a0" stroke="#606060" stroke-width="0.600"/><rect x="5.800" y="1.500" width="3.500" height="3" rx="1" fill="#0000e0"/><polygon points="1,14 4.200,9.800 11,9.800 12.500,12 12.500,14" fill="#909090" stroke="#000" stroke-width="1.200"/><rect x="1" y="12.800" width="11.500" height="1.700" fill="#b0b0b0" stroke="#000" stroke-width="0.900"/><path d="M11 9 H13.500 V13.500" stroke="#000" stroke-width="1.200" fill="none"/><rect x="11.800" y="12.300" width="2" height="1.500" fill="#fff"/></svg></div><div class="btn" style="left:336px;width:23px"><svg viewBox="0 0 16 16"><rect x="6.200" y="4.500" width="2.800" height="6.500" fill="#a0a0a0" stroke="#606060" stroke-width="0.600"/><rect x="5.800" y="1.500" width="3.500" height="3" rx="1" fill="#e00000"/><polygon points="1,14 4.200,9.800 11,9.800 12.500,12 12.500,14" fill="#909090" stroke="#000" stroke-width="1.200"/><rect x="1" y="12.800" width="11.500" height="1.700" fill="#b0b0b0" stroke="#000" stroke-width="0.900"/><path d="M11 8.500 H13 L13 11 L16 14.500" stroke="#000" stroke-width="1.400" fill="none"/></svg></div></div>
<div class="tb" style="left:554px;top:115px;width:283px"><div class="grip" style="width:8px"><i style="top:3px"></i><i style="top:8px"></i><i style="top:13px"></i><i style="top:18px"></i></div><div class="btn" style="left:8px;width:23px"><svg viewBox="0 0 16 16"><polygon points="3.500,0 6,3 1,3" fill="#e00000"/><rect x="1.500" y="3" width="4" height="3" fill="#ffe800"/><path d="M2.500 4.500h0.800M4 4.500h0.800" stroke="#000"/><polygon points="3.500,7 6.500,10.500 4.500,10.500 4.500,12 2.500,12 2.500,10.500 0.500,10.500" fill="#e00000"/><path d="M3.500 12 Q3.500 14.500 6 14.500" stroke="#e00000" stroke-width="1.400" fill="none"/><polygon points="11,5.500 16,11 6,11" fill="#e00000"/><rect x="13" y="5.500" width="2" height="4" fill="#e00000"/><rect x="7" y="11" width="8" height="4.500" fill="#ffe800"/><rect x="10" y="12.500" width="2" height="3" fill="#800000"/><path d="M8 12.500h1.500M12.500 12.500h1.500" stroke="#000"/></svg></div><div class="sep" style="left:33px"></div><div class="abs" style="left:37px;top:2px;width:64px;height:19px;background:#fff;border:1px solid #7a7a7a"><span class="t" style="left:4px;top:3px;font-size:11px">1e+006</span></div><div class="sep" style="left:103px"></div><div class="btn" style="left:107px;width:23px"><svg viewBox="0 0 16 16"><g ><polygon points="3,0.500 5.500,4 0.500,4" fill="#a0a0a0"/><path d="M3 5v5" stroke="#a0a0a0" stroke-dasharray="1 1" stroke-width="1.200"/><rect x="1.500" y="11" width="3.500" height="3.500" fill="#a0a0a0"/><rect x="6.500" y="11.500" width="3.500" height="3" fill="#a0a0a0"/><rect x="11" y="11.500" width="3.500" height="3" fill="#a0a0a0"/><path d="M6.500 9h8.500" stroke="#a0a0a0" stroke-width="1.600"/><polygon points="14.500,0.500 14.500,8 9,4.200" fill="#f0f0f0" stroke="#a0a0a0" stroke-width="1.100"/></g></svg></div><div class="btn" style="left:130px;width:23px"><svg viewBox="0 0 16 16"><g transform="translate(16 0) scale(-1 1)"><polygon points="3,0.500 5.500,4 0.500,4" fill="#a0a0a0"/><path d="M3 5v5" stroke="#a0a0a0" stroke-dasharray="1 1" stroke-width="1.200"/><rect x="1.500" y="11" width="3.500" height="3.500" fill="#a0a0a0"/><rect x="6.500" y="11.500" width="3.500" height="3" fill="#a0a0a0"/><rect x="11" y="11.500" width="3.500" height="3" fill="#a0a0a0"/><path d="M6.500 9h8.500" stroke="#a0a0a0" stroke-width="1.600"/><polygon points="14.500,0.500 14.500,8 9,4.200" fill="#f0f0f0" stroke="#a0a0a0" stroke-width="1.100"/></g></svg></div><div class="sep" style="left:155px"></div><div class="btn" style="left:159px;width:23px"><svg viewBox="0 0 16 16"><path d="M11.5 -1v8M7.5 3h8M8.7 0.20000000000000018l5.600 5.600M14.3 0.20000000000000018l-5.600 5.600" stroke="#ffff30" stroke-width="1.100"/><polygon points="2.500,0 5,3.800 0,3.800" fill="#c00000"/><path d="M2.500 4.500v5" stroke="#000" stroke-dasharray="1 1" stroke-width="1.200"/><rect x="1" y="10.500" width="3" height="4.500" rx="1" fill="#a00000"/><rect x="6" y="11" width="3" height="3.500" rx="1" fill="#a00000"/><rect x="11" y="11" width="3" height="3.500" rx="1" fill="#a00000"/><polygon points="5.500,9 9,4.500 14,9" fill="#e00000"/><rect x="5" y="9" width="10" height="1.500" fill="#f0b0b0"/></svg></div><div class="btn" style="left:182px;width:23px"><svg viewBox="0 0 16 16"><g fill="#fff" stroke="#000" stroke-width="1.3" stroke-linejoin="round"><polygon points="0.7,5 4.5,1.2000000000000002 14.0,1.2000000000000002 10.2,5"/><polygon points="10.2,5 14.0,1.2000000000000002 14.0,10.7 10.2,14.5"/><rect x="0.7" y="5" width="9.5" height="9.5"/></g><path d="M4.500 1.500v9.500h9.500M0.700 14.500L4.500 11" stroke="#808080" stroke-width="0.900" fill="none"/><path d="M12 -1.5v8M8 2.5h8M9.2 -0.2999999999999998l5.600 5.600M14.8 -0.2999999999999998l-5.600 5.600" stroke="#ffff30" stroke-width="1.100"/></svg></div><div class="btn" style="left:205px;width:23px"><svg viewBox="0 0 16 16"><path d="M11.5 -1v8M7.5 3h8M8.7 0.20000000000000018l5.600 5.600M14.3 0.20000000000000018l-5.600 5.600" stroke="#ffff30" stroke-width="1.100"/><rect x="2" y="3.500" width="3.500" height="2" fill="#e00000"/><path d="M5 8.500h9" stroke="#e00000" stroke-width="2.200"/><path d="M4.500 7v7M5 13.500h8" stroke="#606060" stroke-dasharray="1 1" stroke-width="1.200"/><rect x="2" y="10" width="2" height="2.500" fill="#e00000"/></svg></div><div class="btn" style="left:228px;width:23px"><svg viewBox="0 0 16 16"><g fill="#fff" stroke="#000" stroke-width="1.4" stroke-linejoin="round"><polygon points="0.7,9 2.9000000000000004,6.8 8.4,6.8 6.2,9"/><polygon points="6.2,9 8.4,6.8 8.4,12.100000000000001 6.2,14.3"/><rect x="0.7" y="9" width="5.5" height="5.3"/></g><path d="M8 8 L10.500 5.500" stroke="#808080" stroke-width="1.200"/><path d="M12.5 -1v8M8.5 3h8M9.7 0.20000000000000018l5.600 5.600M15.3 0.20000000000000018l-5.600 5.600" stroke="#ffff30" stroke-width="1.100"/></svg></div><div class="sep" style="left:253px"></div><div class="btn" style="left:257px;width:23px"><svg viewBox="0 0 16 16"><path d="M2.500 2.500 L13.500 13.500 M13.500 2.500 L2.500 13.500" stroke="#a0a0a0" stroke-width="3.200"/><path d="M0.500 5.500l3.500 -4M12 1l3.500 4.500M0.500 10.500l3.500 4M15.500 10.500l-3.500 4" stroke="#a0a0a0" stroke-width="1.600"/></svg></div></div>
<div class="tb" style="left:-1px;top:139px;width:383px"><div class="grip" style="width:7px"><i style="top:3px"></i><i style="top:8px"></i><i style="top:13px"></i><i style="top:18px"></i></div><div class="btn on" style="left:7px;width:23px"><svg viewBox="0 0 16 16"><polygon points="3.500,1.500 8.500,1.500 8.500,7 11.500,7 6,13.500 0.500,7 3.500,7" fill="#e01010" stroke="#500000" stroke-width="0.900"/><path d="M5 3v6" stroke="#ff6060" stroke-width="1"/><path d="M11 1.500 L12.200 3 L14.500 0 M11.200 4.500 L14.200 7.500 M14.200 4.500 L11.200 7.500" stroke="#000" stroke-width="0.900" fill="none"/></svg></div><div class="sep" style="left:32px"></div><div class="btn" style="left:36px;width:23px"><svg viewBox="0 0 16 16"><path d="M0.500 7 Q3.500 0.500 8.500 0.500 Q13.500 0.500 16 6" fill="none" stroke="#000" stroke-width="1.700"/><path d="M1 7.500 Q8 2 15.500 6.500 Q11 9.500 8 9.500 Q4 9.500 1 7.500Z" fill="#fff" stroke="#000" stroke-width="0.900"/><circle cx="8" cy="4.800" r="3.300" fill="#0010c8"/><path d="M0.8399999999999999 9.64L5.16 13.96M5.16 9.64L0.8399999999999999 13.96M3 8.8V14.8M0 11.8H6" stroke="#0010c8" stroke-width="1.5"/><circle cx="3" cy="11.8" r="1.6500000000000001" fill="#0010c8"/><polygon points="9.500,15 16,15 16,8.500" fill="#20d830"/><path d="M6.500 10h5" stroke="#e01010" stroke-width="1"/><polygon points="6,10 8,8.500 8,11.500" fill="#e01010"/><polygon points="12.500,10 10.500,8.500 10.500,11.500" fill="#e01010"/></svg></div><div class="btn" style="left:59px;width:23px"><svg viewBox="0 0 16 16"><path d="M1 6.500 L4 8.500 L5 5.500 L6.500 8 L8.500 5.500 L9 8.500 L12.500 6.500 L10.500 10 L13 13.500 L9 12 L6.500 14 L4.500 12 L0.500 13.500 L3 10Z" fill="#0010c8" stroke="#0010c8" stroke-width="1.200" stroke-linejoin="round"/><path d="M11 1.500 L12.200 3 L14.500 0 M11.200 4.500 L14.200 7.500 M14.200 4.500 L11.200 7.500" stroke="#000" stroke-width="0.900" fill="none"/></svg></div><div class="btn" style="left:82px;width:23px"><svg viewBox="0 0 16 16"><circle cx="8" cy="3" r="2" fill="#fff" stroke="#000" stroke-width="1.500"/><path d="M8 5V13.500" stroke="#000" stroke-width="2"/><path d="M1.500 9.500 Q2.500 14 8 14 Q13.500 14 14.500 9.500" fill="none" stroke="#000" stroke-width="2"/><path d="M0.500 9.500h3M12.500 9.500h3" stroke="#000" stroke-width="1.500"/><path d="M0.500 0.500h3M0.500 0.500v3M0.500 0.500l3 3M15.500 0.500h-3M15.500 0.500v3M15.500 0.500l-3 3" stroke="#e01010" stroke-width="1" fill="none"/><path d="M0 6.500h5M11 6.500h5M2 4.500L0 6.500L2 8.500M14 4.500L16 6.500L14 8.500" stroke="#e01010" stroke-width="1" fill="none"/></svg></div><div class="btn" style="left:105px;width:23px"><svg viewBox="0 0 16 16"><path d="M0.9040000000000004 6.904L7.096 13.096M7.096 6.904L0.9040000000000004 13.096M4 5.7V14.3M-0.2999999999999998 10H8.3" stroke="#10d020" stroke-width="2"/><circle cx="4" cy="10" r="2.365" fill="#10d020"/><path d="M11.7 1.0L15.3 4.6M15.3 1.0L11.7 4.6M13.5 0.2999999999999998V5.3M11.0 2.8H16.0" stroke="#10b020" stroke-width="1.3"/><circle cx="13.5" cy="2.8" r="1.375" fill="#10b020"/><path d="M2.500 4.500 Q3 1.500 6.500 1.800" stroke="#c01010" stroke-width="1.800" fill="none"/><polygon points="6,-0.300 9.300,2 6,4.200" fill="#c01010"/></svg></div><div class="btn" style="left:128px;width:23px"><svg viewBox="0 0 16 16"><path d="M0.7640000000000002 7.264L6.236 12.736M6.236 7.264L0.7640000000000002 12.736M3.5 6.2V13.8M-0.2999999999999998 10H7.3" stroke="#10d020" stroke-width="2"/><circle cx="3.5" cy="10" r="2.09" fill="#10d020"/><path d="M11.7 1.0L15.3 4.6M15.3 1.0L11.7 4.6M13.5 0.2999999999999998V5.3M11.0 2.8H16.0" stroke="#10b020" stroke-width="1.3"/><circle cx="13.5" cy="2.8" r="1.375" fill="#10b020"/><rect x="8.600" y="7.200" width="6.800" height="7.200" fill="#fff" stroke="#000" stroke-width="1.300"/><path d="M2.500 4.500 Q3 1.500 6.500 1.800" stroke="#c01010" stroke-width="1.800" fill="none"/><polygon points="6,-0.300 9.300,2 6,4.200" fill="#c01010"/></svg></div><div class="btn" style="left:151px;width:23px"><svg viewBox="0 0 16 16"><text x="0.500" y="6" font-family="Liberation Sans, sans-serif" font-size="6.500" fill="#000" textLength="14.500" lengthAdjust="spacingAndGlyphs">Cirle</text><path d="M6.1240000000000006 8.324L10.876 13.075999999999999M10.876 8.324L6.1240000000000006 13.075999999999999M8.5 7.3999999999999995V14.0M5.2 10.7H11.8" stroke="#10c020" stroke-width="1.6"/><circle cx="8.5" cy="10.7" r="1.815" fill="#10c020"/></svg></div><div class="btn" style="left:174px;width:23px"><svg viewBox="0 0 16 16"><path d="M4.500 14 V11 Q4.500 8 8 7.500 Q12.500 7 12.700 4 V0.500" fill="none" stroke="#f060f0" stroke-width="1.300" stroke-dasharray="1.100 1.500"/></svg></div><div class="btn on" style="left:197px;width:23px"><svg viewBox="0 0 16 16"><path d="M4.500 14 V11 Q4.500 8 8 7.500 Q12.500 7 12.700 4 V0.500" fill="none" stroke="#108048" stroke-width="1.300" stroke-dasharray="1.100 1.500"/></svg></div><div class="btn" style="left:220px;width:23px"><svg viewBox="0 0 16 16"><path d="M4.300 14 V11 Q4.500 8 8 7.500 Q12 7 12.200 4 V0.500" fill="none" stroke="#f060f0" stroke-width="1.300" stroke-dasharray="1.100 1.500"/><text x="8.800" y="15" font-family="Liberation Sans, sans-serif" font-size="10.500" fill="#d01818">K</text></svg></div><div class="btn" style="left:243px;width:23px"><svg viewBox="0 0 16 16"><path d="M0.500 7 Q3.500 0.500 8.500 0.500 Q13.500 0.500 16 6" fill="none" stroke="#000" stroke-width="1.700"/><path d="M1 7.500 Q8 2 15.500 6.500 Q11 9.500 8 9.500 Q4 9.500 1 7.500Z" fill="#fff" stroke="#000" stroke-width="0.900"/><circle cx="8" cy="4.300" r="3.300" fill="#0010c8"/><path d="M0.8399999999999999 9.54L5.16 13.86M5.16 9.54L0.8399999999999999 13.86M3 8.7V14.7M0 11.7H6" stroke="#10d020" stroke-width="1.5"/><circle cx="3" cy="11.7" r="1.6500000000000001" fill="#10d020"/><path d="M7.500 13.500 H12 V10.500" stroke="#e01010" stroke-width="2" fill="none"/><polygon points="9.500,11 14.500,11 12,8" fill="#e01010"/></svg></div><div class="btn" style="left:266px;width:23px"><svg viewBox="0 0 16 16"><polygon points="0.500,7.500 2.800,5.500 9.500,12.500 7.200,14.800" fill="#e01010" stroke="#500000" stroke-width="0.800"/><path d="M3.500 4 L6.500 1.500" stroke="#000" stroke-width="1"/><path d="M6 3 L12 8.500 M6 3 l0.300 2.200 M6 3 l2.200 0.200 M12 8.500 l-2.200 -0.200 M12 8.500 l-0.300 -2.200" stroke="#000" stroke-width="1" fill="none"/><text x="7.800" y="5" font-family="Liberation Sans, sans-serif" font-size="6.500" font-weight="bold" fill="#000">Km</text></svg></div><div class="btn" style="left:289px;width:23px"><svg viewBox="0 0 16 16"><polygon points="0.600,6.200 5.300,1.400 5.300,10.700 0.600,15.300" fill="#fff" stroke="#000" stroke-width="1.300"/><polygon points="10.600,6.200 15.400,1.400 15.400,10.700 10.600,15.300" fill="#fff" stroke="#000" stroke-width="1.300"/><path d="M4 8.300h9" stroke="#e01010" stroke-width="1.600"/><polygon points="2,8.300 5.500,5.800 5.500,10.800" fill="#e01010"/><polygon points="15,8.300 11.500,5.800 11.500,10.800" fill="#e01010"/></svg></div><div class="btn" style="left:312px;width:23px"><svg viewBox="0 0 16 16"><g fill="#f4f0f4" stroke="#800080" stroke-width="1.3" stroke-linejoin="round"><polygon points="0.7,4.5 4.7,0.5 15.2,0.5 11.2,4.5"/><polygon points="11.2,4.5 15.2,0.5 15.2,10.5 11.2,14.5"/><rect x="0.7" y="4.5" width="10.5" height="10"/></g><rect x="7" y="3" width="4.500" height="4.500" fill="#fff" stroke="#000" stroke-width="1.200"/><rect x="6" y="4.200" width="4.500" height="4.500" fill="#fff" stroke="#000" stroke-width="1.300"/><path d="M4.500 5.500v4.500M5 10h5" stroke="#000" stroke-width="1.200" stroke-dasharray="1 1"/><path d="M2.500 12.500h1M11.500 10.500h1" stroke="#800080" stroke-width="1.200"/></svg></div><div class="btn" style="left:335px;width:23px"><svg viewBox="0 0 16 16"><g fill="#fff" stroke="#000" stroke-width="1.5" stroke-linejoin="round"><polygon points="0.7,5.5 4.5,0.5 15.0,0.5 11.2,5.5"/><polygon points="11.2,5.5 15.0,0.5 15.0,9.5 11.2,14.5"/><rect x="0.7" y="5.5" width="10.5" height="9"/></g><path d="M5.500 5.500 V9 H11" stroke="#000" stroke-width="1.300" fill="none"/><circle cx="9" cy="5.800" r="2.900" fill="#fff" stroke="#800080" stroke-width="1.100"/><circle cx="9" cy="5.800" r="1.400" fill="#fff" stroke="#800080" stroke-width="1"/></svg></div><div class="btn" style="left:358px;width:23px"><svg viewBox="0 0 16 16"><g fill="#fff" stroke="#000" stroke-width="1.5" stroke-linejoin="round"><polygon points="0.7,5.5 4.5,0.5 15.0,0.5 11.2,5.5"/><polygon points="11.2,5.5 15.0,0.5 15.0,9.5 11.2,14.5"/><rect x="0.7" y="5.5" width="10.5" height="9"/></g><g fill="#fff" stroke="#000" stroke-width="1.3" stroke-linejoin="round"><polygon points="6,3.5 8,1.5 12.5,1.5 10.5,3.5"/><polygon points="10.5,3.5 12.5,1.5 12.5,7.0 10.5,9.0"/><rect x="6" y="3.5" width="4.5" height="5.5"/></g><path d="M5.500 5.500 V9 H11" stroke="#000" stroke-width="1.300" fill="none"/></svg></div></div>
<div class="abs" style="left:0;top:163px;width:159px;height:1px;background:#a0a0a0"></div>
<div class="abs" style="left:0;top:194px;width:158px;height:1px;background:#a0a0a0"></div>
<div class="abs" style="left:0;top:195px;width:158px;height:465px;background:#f0f0f0"></div>
<div class="abs" style="left:0;top:660px;width:158px;height:1px;background:#a0a0a0"></div>
<div class="abs" style="left:158px;top:164px;width:1px;height:553px;background:#a0a0a0"></div>
<div class="t" style="left:6px;top:200px;font-size:11px;letter-spacing:-0.1px">Light</div>
<div class="t" style="left:6px;top:214px;font-size:11px;letter-spacing:-0.2px">Sun lens flare bcg 1</div>
<div class="t" style="left:6px;top:228px;font-size:11px;letter-spacing:-0.2px">directional:36.8713-70.951</div>
<div class="combo" style="left:6px;top:243px;width:146px;height:22px;overflow:hidden"><svg class="abs" style="left:4px;top:7px" width="9" height="6" viewBox="0 0 9 6"><path d="M0.5 0.8 L4.5 4.8 L8.5 0.8" fill="none" stroke="#404040" stroke-width="1"/></svg><span class="t" style="left:21px;top:5px;font-size:11.5px;letter-spacing:0.08px">Lens flare only (O)</span><span class="t" style="left:130px;top:5px;font-size:11.5px">[m_</span></div>
<div class="abs" style="left:6px;top:280px;width:13px;height:13px;background:#fff;border:1px solid #1f5fa8"></div>
<div class="t" style="left:22px;top:282px;font-size:11px;letter-spacing:-0.23px">Lens flare only</div>
<div class="abs" style="left:0;top:318px;width:158px;height:1px;background:#a0a0a0"></div>
<div class="abs" style="left:6px;top:326px;width:146px;height:39px;background:#f0f0f0;border:1px solid #828790"></div>
<div class="abs" style="left:7px;top:327px;width:127px;height:21px;background:#fff"></div>
<svg class="abs" style="left:7px;top:327px" width="144" height="37" viewBox="0 0 144 37"><path d="M10.5 0 V20 M11 9.5 H21" stroke="#808080" stroke-width="1" stroke-dasharray="1 1" fill="none"/><rect x="22" y="1.5" width="15" height="15" fill="#38d8e8" stroke="#38104c" stroke-width="1.6"/><polygon points="23,15.5 23,11 29,5.5 36,15.5" fill="#c8c8c8"/><polygon points="31.5,3 28.5,8 30,8 28,11.5 31,11.5 31,14 32.5,14 32.5,11.5 35.5,11.5 33.5,8 35,8" fill="#0c6a1c"/><path d="M24 18.5 H33" stroke="#204020" stroke-width="1" stroke-dasharray="2 1"/><rect x="40" y="1" width="67" height="17" fill="#f0f0f0"/><g fill="none" stroke="#606060" stroke-width="1.9"><path d="M131 8.5 L134.5 5 L138 8.500"/><path d="M131 14.5 L134.5 18 L138 14.500"/><path d="M12.5 25 L9 28.5 L12.5 32"/><path d="M115.5 25 L119 28.5 L115.5 32"/></g><rect x="27" y="21" width="56" height="15" fill="#cdcdcd"/></svg>
<div class="t" style="left:49px;top:330px;font-size:11px;letter-spacing:-0.3px">Backgrounds</div>
<div class="abs" style="left:6px;top:366px;width:146px;height:288px;background:#f0f0f0;border:1px solid #828790;overflow:hidden"><div class="abs" style="left:0px;top:0;width:16px;height:16px;background:linear-gradient(#f4f1e6,#d9d4c4);border:1px solid;border-color:#fff #8c8878 #8c8878 #fff;color:#0000a8;font-weight:bold;font-size:13px;line-height:14px;text-align:center;-webkit-text-stroke:0.6px currentColor;">S</div><div class="abs" style="left:16px;top:0;width:16px;height:16px;background:linear-gradient(#f4f1e6,#d9d4c4);border:1px solid;border-color:#fff #8c8878 #8c8878 #fff;color:#0000a8;font-weight:bold;font-size:13px;line-height:14px;text-align:center;-webkit-text-stroke:0.6px currentColor;">M</div><div class="abs" style="left:32px;top:0;width:16px;height:16px;background:radial-gradient(circle at 50% 45%,#fff200 0%,#ffe000 45%,#ffa800 100%);border:1px solid;border-color:#ffc040 #e08000 #e08000 #ffc040;color:#000;font-weight:bold;font-size:13px;line-height:14px;text-align:center;-webkit-text-stroke:0.6px currentColor;">L</div><div class="abs" style="left:48px;top:0;width:16px;height:16px;background:linear-gradient(#f4f1e6,#d9d4c4);border:1px solid;border-color:#fff #8c8878 #8c8878 #fff;color:#0000a8;font-weight:bold;font-size:13px;line-height:14px;text-align:center;-webkit-text-stroke:0.6px currentColor;letter-spacing:-1.5px;text-indent:-1px;">XL</div><div class="abs" style="left:64px;top:0;width:16px;height:16px;background:linear-gradient(#f4f1e6,#d9d4c4);border:1px solid;border-color:#fff #8c8878 #8c8878 #fff;color:#0000a8;font-weight:bold;font-size:13px;line-height:14px;text-align:center;-webkit-text-stroke:0.6px currentColor;">D</div><div class="abs" style="left:80px;top:0;width:16px;height:16px;background:linear-gradient(#f4f1e6,#d9d4c4);border:1px solid;border-color:#fff #8c8878 #8c8878 #fff;color:#0000a8;font-weight:bold;font-size:13px;line-height:14px;text-align:center;-webkit-text-stroke:0.6px currentColor;">F</div><div class="abs" style="left:96px;top:0;width:16px;height:16px;background:linear-gradient(#f4f1e6,#d9d4c4);border:1px solid;border-color:#fff #8c8878 #8c8878 #fff;color:#0000a8;font-weight:bold;font-size:13px;line-height:14px;text-align:center;-webkit-text-stroke:0.6px currentColor;"></div><div class="abs" style="left:112px;top:0;width:16px;height:16px;background:linear-gradient(#f4f1e6,#d9d4c4);border:1px solid;border-color:#fff #8c8878 #8c8878 #fff;color:#0000a8;font-weight:bold;font-size:13px;line-height:14px;text-align:center;-webkit-text-stroke:0.6px currentColor;"></div><svg class="abs" style="left:0;top:16px" width="128" height="271" viewBox="0 0 128 271"><rect x="0" y="0" width="128" height="1" fill="#606060"/><defs><filter id="tb2"><feGaussianBlur stdDeviation="2"/></filter><filter id="tb1"><feGaussianBlur stdDeviation="1"/></filter><filter id="tb3"><feGaussianBlur stdDeviation="3.2"/></filter><filter id="tn" x="0" y="0" width="100%" height="100%"><feTurbulence type="fractalNoise" baseFrequency="0.05 0.07" numOctaves="4" seed="5"/><feColorMatrix type="matrix" values="0 0 0 0 1 0 0 0 0 1 0 0 0 0 1 2.8 0 0 0 -1.1"/></filter><filter id="tn2" x="0" y="0" width="100%" height="100%"><feTurbulence type="fractalNoise" baseFrequency="0.035 0.06" numOctaves="4" seed="23"/><feColorMatrix type="matrix" values="0 0 0 0 1 0 0 0 0 1 0 0 0 0 1 3 0 0 0 -1.25"/></filter><filter id="tn3" x="0" y="0" width="100%" height="100%"><feTurbulence type="fractalNoise" baseFrequency="0.03 0.08" numOctaves="3" seed="41"/><feColorMatrix type="matrix" values="0 0 0 0 1 0 0 0 0 1 0 0 0 0 1 2.4 0 0 0 -0.95"/></filter><linearGradient id="g00" x1="0" y1="0" x2="0" y2="1"><stop offset="0" stop-color="#0c2450"/><stop offset="0.6" stop-color="#13284e"/><stop offset="0.76" stop-color="#244672"/><stop offset="0.85" stop-color="#5e90be"/><stop offset="0.905" stop-color="#f4fcff"/><stop offset="0.95" stop-color="#cfe8f8"/><stop offset="1" stop-color="#9ccaec"/></linearGradient><linearGradient id="g01" x1="0" y1="0" x2="1" y2="0.2"><stop offset="0" stop-color="#5a7088"/><stop offset="0.5" stop-color="#7088a0"/><stop offset="1" stop-color="#c8d8e8"/></linearGradient><radialGradient id="g10" cx="0.55" cy="0.4" r="0.8"><stop offset="0" stop-color="#5878b0"/><stop offset="0.45" stop-color="#5c8cd0"/><stop offset="1" stop-color="#84b4ec"/></radialGradient><linearGradient id="g11" x1="0" y1="0" x2="0" y2="1"><stop offset="0" stop-color="#2a4f98"/><stop offset="0.55" stop-color="#3462aa"/><stop offset="0.85" stop-color="#5c86c0"/><stop offset="1" stop-color="#4a6890"/></linearGradient><linearGradient id="g20" x1="0" y1="0" x2="0" y2="1"><stop offset="0" stop-color="#2f6fc8"/><stop offset="0.45" stop-color="#3c78d0"/><stop offset="0.8" stop-color="#7ab0e8"/><stop offset="1" stop-color="#a0b0c0"/></linearGradient><linearGradient id="g21" x1="0" y1="0" x2="0" y2="1"><stop offset="0" stop-color="#4a3e30"/><stop offset="0.5" stop-color="#5a4a38"/><stop offset="0.78" stop-color="#80582c"/><stop offset="0.9" stop-color="#e88018"/><stop offset="1" stop-color="#c05c10"/></linearGradient><linearGradient id="g30" x1="0" y1="0" x2="0" y2="1"><stop offset="0" stop-color="#26303e"/><stop offset="0.6" stop-color="#3a4656"/><stop offset="1" stop-color="#5a6a78"/></linearGradient><linearGradient id="g31" x1="0" y1="0" x2="0" y2="1"><stop offset="0" stop-color="#222c5c"/><stop offset="1" stop-color="#1c2450"/></linearGradient><linearGradient id="g40" x1="0" y1="0" x2="0" y2="1"><stop offset="0" stop-color="#2c2c2a"/><stop offset="0.5" stop-color="#4a4438"/><stop offset="1" stop-color="#8a6e48"/></linearGradient><linearGradient id="g41" x1="0" y1="0" x2="0.3" y2="1"><stop offset="0" stop-color="#7cb8ee"/><stop offset="1" stop-color="#b4dcf8"/></linearGradient></defs><rect width="128" height="271" fill="#000"/><clipPath id="c00"><rect x="1" y="-37.5" width="62" height="62"/></clipPath><clipPath id="c01"><rect x="64.5" y="-37.5" width="62" height="62"/></clipPath><clipPath id="c10"><rect x="1" y="26.5" width="62" height="62"/></clipPath><clipPath id="c11"><rect x="64.5" y="26.5" width="62" height="62"/></clipPath><clipPath id="c20"><rect x="1" y="90.5" width="62" height="62"/></clipPath><clipPath id="c21"><rect x="64.5" y="90.5" width="62" height="62"/></clipPath><clipPath id="c30"><rect x="1" y="154.5" width="62" height="62"/></clipPath><clipPath id="c31"><rect x="64.5" y="154.5" width="62" height="62"/></clipPath><clipPath id="c40"><rect x="1" y="218.5" width="62" height="62"/></clipPath><clipPath id="c41"><rect x="64.5" y="218.5" width="62" height="62"/></clipPath><g clip-path="url(#c00)"><g transform="translate(1 -37.5)"><rect width="62" height="62" fill="url(#g00)"/><circle cx="33" cy="40" r="1.6" fill="#fff" filter="url(#tb1)"/><circle cx="33" cy="40" r="1" fill="#fff"/></g></g><g clip-path="url(#c01)"><g transform="translate(64.5 -37.5)"><rect width="62" height="62" fill="url(#g01)"/><rect width="62" height="62" filter="url(#tn)" opacity="0.5"/><ellipse cx="48" cy="42" rx="13" ry="6" fill="#f4faff" filter="url(#tb2)"/><ellipse cx="40" cy="47" rx="9" ry="3" fill="#e0ecf8" opacity="0.8" filter="url(#tb2)"/><ellipse cx="14" cy="46" rx="12" ry="4" fill="#506478" opacity="0.8" filter="url(#tb2)"/><polygon points="0,62 0,57 5,54 10,58 16,53 22,58 28,55 34,58 40,54 46,57 52,54 58,56 62,54 62,62" fill="#74889c" filter="url(#tb1)"/></g></g><g clip-path="url(#c10)"><g transform="translate(1 26.5)"><rect width="62" height="62" fill="url(#g10)"/><rect width="62" height="62" filter="url(#tn2)" opacity="0.5"/><g filter="url(#tb2)" fill="#fff" opacity="0.92"><ellipse cx="12" cy="14" rx="9" ry="4" opacity="0.75" transform="rotate(40 12 14)"/><ellipse cx="7" cy="34" rx="7" ry="10" opacity="0.7"/><ellipse cx="22" cy="50" rx="16" ry="7" opacity="0.75"/><ellipse cx="48" cy="52" rx="12" ry="6" opacity="0.6"/><ellipse cx="44" cy="6" rx="14" ry="3" opacity="0.55" transform="rotate(-12 44 6)"/><ellipse cx="28" cy="8" rx="3" ry="8" opacity="0.45" transform="rotate(15 28 8)"/><ellipse cx="56" cy="34" rx="5" ry="9" opacity="0.45"/></g><ellipse cx="36" cy="26" rx="11" ry="10" fill="#5a7cb4" opacity="0.5" filter="url(#tb3)"/></g></g><g clip-path="url(#c11)"><g transform="translate(64.5 26.5)"><rect width="62" height="62" fill="url(#g11)"/><ellipse cx="26" cy="36" rx="6" ry="4.5" fill="#fff" filter="url(#tb1)"/><ellipse cx="13" cy="33" rx="3" ry="2" fill="#fff" filter="url(#tb1)"/><ellipse cx="8" cy="26" rx="4" ry="1.6" fill="#fff" filter="url(#tb1)"/><ellipse cx="46" cy="29" rx="5" ry="3" fill="#fff" transform="rotate(-30 46 29)" filter="url(#tb1)"/><ellipse cx="56" cy="5" rx="6" ry="4" fill="#fff" filter="url(#tb1)"/><ellipse cx="26" cy="3" rx="7" ry="2" fill="#fff" filter="url(#tb1)"/><ellipse cx="8" cy="2" rx="5" ry="2" fill="#fff" opacity="0.8" filter="url(#tb1)"/><ellipse cx="54" cy="42" rx="5" ry="1.6" fill="#fff" opacity="0.9" filter="url(#tb1)"/><ellipse cx="47" cy="52" rx="7" ry="2" fill="#fff" opacity="0.85" filter="url(#tb1)"/><ellipse cx="20" cy="50" rx="5" ry="1.6" fill="#fff" opacity="0.8" filter="url(#tb1)"/><polygon points="0,62 0,54 5,50 10,49 14,53 18,56 22,52 26,57 30,60 34,55 38,51 44,50 48,54 52,57 56,55 62,52 62,62" fill="#5c7a96" filter="url(#tb1)"/><polygon points="0,62 0,58 8,55 16,59 24,57 36,60 42,56 50,59 62,57 62,62" fill="#7892a8" opacity="0.7" filter="url(#tb1)"/></g></g><g clip-path="url(#c20)"><g transform="translate(1 90.5)"><rect width="62" height="62" fill="url(#g20)"/><rect width="62" height="62" filter="url(#tn3)" opacity="0.6"/><ellipse cx="10" cy="34" rx="14" ry="4" fill="#fff" opacity="0.9" filter="url(#tb2)" transform="rotate(22 10 34)"/><ellipse cx="52" cy="33" rx="9" ry="2.5" fill="#fff" opacity="0.85" filter="url(#tb2)" transform="rotate(-10 52 33)"/><ellipse cx="30" cy="45" rx="28" ry="3" fill="#e8f4ff" opacity="0.9" filter="url(#tb2)"/><ellipse cx="46" cy="42" rx="12" ry="2.5" fill="#fff" opacity="0.8" filter="url(#tb2)"/><polygon points="0,0 62,0 62,19.5 23.5,32 0,14.500" fill="#a9b93a"/><ellipse cx="16" cy="16" rx="6" ry="3" fill="#c8d060" opacity="0.8" filter="url(#tb2)" transform="rotate(30 16 16)"/><ellipse cx="40" cy="8" rx="20" ry="6" fill="#9cae30" opacity="0.6" filter="url(#tb3)"/><rect x="0" y="53" width="62" height="9" fill="#aab8c8" filter="url(#tb1)"/><rect x="0" y="51" width="62" height="3" fill="#d8e8f4" opacity="0.8" filter="url(#tb1)"/></g></g><g clip-path="url(#c21)"><g transform="translate(64.5 90.5)"><rect width="62" height="62" fill="url(#g21)"/><rect width="62" height="62" filter="url(#tn2)" opacity="0.18"/><ellipse cx="30" cy="12" rx="30" ry="10" fill="#3c3226" opacity="0.75" filter="url(#tb3)"/><ellipse cx="48" cy="26" rx="16" ry="5" fill="#8c7858" opacity="0.7" filter="url(#tb3)" transform="rotate(-22 48 26)"/><ellipse cx="16" cy="32" rx="15" ry="8" fill="#3a3024" opacity="0.75" filter="url(#tb3)"/><ellipse cx="44" cy="42" rx="18" ry="4" fill="#a08458" opacity="0.7" filter="url(#tb3)" transform="rotate(-14 44 42)"/><ellipse cx="28" cy="56" rx="30" ry="3.5" fill="#f89820" opacity="0.95" filter="url(#tb2)"/><ellipse cx="16" cy="53" rx="12" ry="2" fill="#ffc040" opacity="0.8" filter="url(#tb2)"/><rect x="0" y="60.500" width="62" height="1.500" fill="#3a2410"/></g></g><g clip-path="url(#c30)"><g transform="translate(1 154.5)"><rect width="62" height="62" fill="url(#g30)"/><ellipse cx="14" cy="10" rx="12" ry="6" fill="#d8d4c0" opacity="0.8" filter="url(#tb3)" transform="rotate(35 14 10)"/><ellipse cx="40" cy="14" rx="16" ry="5" fill="#c8c8b8" opacity="0.75" filter="url(#tb3)" transform="rotate(-30 40 14)"/><ellipse cx="30" cy="36" rx="12" ry="8" fill="#f0ecd8" opacity="0.9" filter="url(#tb3)" transform="rotate(30 30 36)"/><ellipse cx="48" cy="44" rx="16" ry="8" fill="#fffaf0" opacity="0.95" filter="url(#tb3)"/><ellipse cx="30" cy="50" rx="22" ry="6" fill="#f4f0e0" opacity="0.8" filter="url(#tb3)"/><ellipse cx="16" cy="50" rx="14" ry="5" fill="#e0dcc8" opacity="0.8" filter="url(#tb3)"/><ellipse cx="52" cy="24" rx="8" ry="5" fill="#20283a" opacity="0.7" filter="url(#tb3)"/><rect x="0" y="56" width="62" height="6" fill="#4a5c68" opacity="0.8" filter="url(#tb1)"/></g></g><g clip-path="url(#c31)"><g transform="translate(64.5 154.5)"><rect width="62" height="62" fill="url(#g31)"/><ellipse cx="12" cy="33" rx="6" ry="4.5" fill="#a84868" opacity="0.85" filter="url(#tb2)"/><circle cx="18" cy="37" r="1.3" fill="#fff"/><circle cx="18" cy="37" r="2.4" fill="#b8c8ff" opacity="0.6" filter="url(#tb1)"/><rect x="0" y="59" width="62" height="3" fill="#141a38"/></g></g><g clip-path="url(#c40)"><g transform="translate(1 218.5)"><rect width="62" height="62" fill="url(#g40)"/><rect width="62" height="62" filter="url(#tn2)" opacity="0.12"/><ellipse cx="30" cy="12" rx="30" ry="8" fill="#1c1c1c" opacity="0.6" filter="url(#tb3)"/><ellipse cx="24" cy="34" rx="26" ry="5" fill="#7c6a4c" opacity="0.7" filter="url(#tb3)" transform="rotate(-8 24 34)"/><ellipse cx="40" cy="48" rx="26" ry="4" fill="#a08050" opacity="0.6" filter="url(#tb3)"/></g></g><g clip-path="url(#c41)"><g transform="translate(64.5 218.5)"><rect width="62" height="62" fill="url(#g41)"/><rect width="62" height="62" filter="url(#tn3)" opacity="0.45"/><ellipse cx="40" cy="48" rx="20" ry="8" fill="#fff" opacity="0.5" filter="url(#tb3)"/></g></g><g shape-rendering="crispEdges"><rect x="0.5" y="26.5" width="63" height="63" fill="none" stroke="#000" stroke-width="1"/><rect x="0.5" y="26.5" width="63" height="63" fill="none" stroke="#fff" stroke-width="1" stroke-dasharray="1 1"/><rect x="0.5" y="26.5" width="63" height="63" fill="none" stroke="#701818" stroke-width="1" stroke-dasharray="1 1" stroke-dashoffset="1" opacity="0.5"/></g></svg><svg class="abs" style="left:128px;top:0" width="17" height="287" viewBox="0 0 17 287"><rect width="17" height="287" fill="#f0f0f0"/><rect x="0" y="80" width="16" height="17" fill="#cdcdcd"/><g fill="none" stroke="#505050" stroke-width="1.9"><path d="M4.500 11 L8 7.500 L11.500 11"/><path d="M4.500 276 L8 279.500 L11.500 276"/></g></svg></div>
<div class="abs" style="left:0;top:661px;width:158px;height:56px;background:#fff"></div><div class="abs" style="left:0;top:717px;width:160px;height:1px;background:#8c8c8c"></div><div class="abs" style="left:0;top:718px;width:160px;height:1px;background:#fff"></div>
<div class="abs" style="left:159px;top:164px;width:1207px;height:555px;background:#f0f0f0"></div><div class="abs" style="left:158px;top:163px;width:584px;height:271px;border:1px solid;border-color:#a0a0a0 #fff #fff #a0a0a0"><div class="abs" style="left:0;top:0;width:582px;height:269px;border:1px solid;border-color:#696969 #e3e3e3 #e3e3e3 #696969;overflow:hidden"><svg class="abs" style="left:0;top:0" width="580" height="267" viewBox="0 0 580 267" shape-rendering="crispEdges"><rect width="580" height="267" fill="#fff"/><path d="M16.5 0V267M51.5 0V267M85.5 0V267M120.5 0V267M155.5 0V267M190.5 0V267M225.5 0V267M260.5 0V267M295.5 0V267M330.5 0V267M365.5 0V267M400.5 0V267M435.5 0V267M470.5 0V267M505.5 0V267M540.5 0V267M575.5 0V267" stroke="#e4fbfd" stroke-width="3" fill="none" transform="translate(1 0)"/><path d="M17.5 0V267M52.5 0V267M86.5 0V267M121.5 0V267M156.5 0V267M191.5 0V267M226.5 0V267M261.5 0V267M331.5 0V267M366.5 0V267M401.5 0V267M436.5 0V267M471.5 0V267M506.5 0V267M541.5 0V267M576.5 0V267" stroke="#3a8c97" stroke-width="1" stroke-dasharray="1 1" fill="none"/><path d="M0 26.5H580M0 61.5H580M0 96.5H580M0 166.5H580M0 201.5H580M0 236.5H580" stroke="#3a8c97" stroke-width="1" stroke-dasharray="3 1 1 3 1 3 2 4 3 1 1 2 1 2 2 1 2 5 1 2 5 6 5 5 5 2 1 3 1 1 5 2 2 3 4 1 2 3 2 3" fill="none"/><path d="M296.5 0V267M0 131.5H580" stroke="#3a919c" stroke-width="1" fill="none"/><defs><pattern id="mesh" x="389" y="228" width="9" height="9" patternUnits="userSpaceOnUse" patternTransform="translate(-160 -165)"><path d="M0 0h9v9h-9zM1 1h3.65v2.6h-3.65zM5.95 1h2.85v2.6h-2.85zM1 4.9h3.65v3.9h-3.65zM5.95 4.9h2.85v3.9h-2.85z" fill="#858585" fill-rule="evenodd"/><path d="M1 1h0.800v0.800zM4.650 1v0.800h-0.800zM1 3.600h0.800v-0.800zM4.650 3.600h-0.800v-0.800zM5.950 1h0.700v0.700zM8.800 1v0.700h-0.700zM5.950 3.600h0.700v-0.700zM8.800 3.600h-0.700v-0.700zM5.950 4.900h0.700v0.700zM8.800 4.900v0.700h-0.700zM5.950 8.800h0.700v-0.700zM8.800 8.800h-0.700v-0.700z" fill="#858585"/><path d="M1.6 8.1 L4.1 5.5" stroke="#8c8c8c" stroke-width="0.8"/><path d="M2.1 2.3h1.5M6.9 2.3h1M7.4 6v1.7" stroke="#8c8c8c" stroke-width="0.9"/></pattern></defs><rect x="229" y="63" width="137" height="137" fill="url(#mesh)" shape-rendering="geometricPrecision"/><rect x="226.5" y="61.5" width="140" height="140" fill="none" stroke="#303838" stroke-width="1"/><g shape-rendering="geometricPrecision"><path d="M233.5 135.5 L240 134.5" stroke="#c8401c" stroke-width="1.6"/><path d="M237 131.5 L237 138.5" stroke="#f4a420" stroke-width="2"/><circle cx="237" cy="135" r="1.2" fill="#ffd83c"/></g></svg></div></div><div class="abs" style="left:744px;top:163px;width:622px;height:271px;border:1px solid;border-color:#a0a0a0 #fff #fff #a0a0a0"><div class="abs" style="left:0;top:0;width:620px;height:269px;border:1px solid;border-color:#696969 #e3e3e3 #e3e3e3 #696969;overflow:hidden"><svg class="abs" style="left:0;top:0" width="618" height="267" viewBox="0 0 618 267"><rect width="618" height="267" fill="#c0c0c0"/><polygon points="198.0,45.0 204.0,42.5 210.0,36.0 216.0,27.0 222.0,20.0 228.0,17.0 234.0,17.5 240.0,19.5 247.0,20.5 253.0,18.5 259.0,16.0 265.0,15.2 272.0,16.0 280.0,17.8 289.0,19.0 295.0,21.5 300.0,20.5 306.0,17.0 312.0,15.2 318.0,15.5 324.0,17.5 331.0,20.5 337.0,23.0 344.0,26.5 350.0,28.5 357.0,28.0 364.0,25.5 370.0,21.0 375.0,17.0 380.0,15.8 384.0,17.0 388.0,22.0 392.0,28.5 396.0,34.0 401.0,40.0 406.0,44.5 411.5,47.5 394.0,49.0 364.0,51.5 334.0,54.0 304.0,56.0 276.0,57.3 259.0,56.5 239.0,53.5 219.0,49.0 204.0,46.0" fill="#808080"/><defs><linearGradient id="skyL" x1="0" y1="0" x2="0.12" y2="1"><stop offset="0" stop-color="#c0d4ec"/><stop offset="0.4" stop-color="#98bee8"/><stop offset="0.72" stop-color="#62a4e4"/><stop offset="1" stop-color="#4c92da"/></linearGradient><linearGradient id="skyR" x1="0.1" y1="0" x2="0" y2="1"><stop offset="0" stop-color="#c4d6ee"/><stop offset="0.45" stop-color="#98bce6"/><stop offset="0.75" stop-color="#64a4e2"/><stop offset="1" stop-color="#4c90d6"/></linearGradient><filter id="cl" x="0" y="0" width="100%" height="100%"><feTurbulence type="fractalNoise" baseFrequency="0.07 0.13" numOctaves="5" seed="11" result="n"/><feColorMatrix in="n" type="matrix" values="0 0 0 0 1  0 0 0 0 1  0 0 0 0 1  2.8 0 0 0 -1.0"/></filter><filter id="b1"><feGaussianBlur stdDeviation="1.2"/></filter><clipPath id="cpL"><polygon points="205.5,154.0 316.5,128.0 316.5,179.5 214.0,216.0"/></clipPath><clipPath id="cpR"><polygon points="316.5,128.0 411.5,166.0 404.5,232.0 316.5,179.5"/></clipPath></defs><polygon points="205.5,154.0 316.5,128.0 316.5,179.5 214.0,216.0" fill="url(#skyL)"/><polygon points="316.5,128.0 411.5,166.0 404.5,232.0 316.5,179.5" fill="url(#skyR)"/><g clip-path="url(#cpL)"><rect x="194" y="120" width="130" height="80" filter="url(#cl)" opacity="0.85" transform="skewY(-13) translate(0 70)"/></g><g clip-path="url(#cpR)"><rect x="314" y="120" width="110" height="90" filter="url(#cl)" opacity="0.85" transform="skewY(21) translate(0 -118)"/></g><clipPath id="cmL"><polygon points="214.0,216.0 212.5,208.0 219.0,206.0 226.0,204.0 235.0,201.0 243.0,196.0 252.0,191.0 258.0,184.5 262.0,182.0 266.0,184.5 271.0,186.0 280.0,183.0 289.0,180.0 295.0,175.0 301.0,170.5 308.0,167.0 316.5,164.5 316.5,179.5"/></clipPath><clipPath id="cmR"><polygon points="316.5,179.5 316.5,164.5 323.0,168.0 330.0,172.5 334.0,178.0 338.0,184.0 344.0,189.0 350.0,193.0 358.0,197.0 367.0,201.0 377.0,201.0 382.0,198.0 387.0,195.0 391.0,200.0 395.5,205.5 400.0,211.0 404.0,217.0 404.5,232.0"/></clipPath><g clip-path="url(#cpL)"><polygon points="214.0,216.0 212.5,208.0 219.0,206.0 226.0,204.0 235.0,201.0 243.0,196.0 252.0,191.0 258.0,184.5 262.0,182.0 266.0,184.5 271.0,186.0 280.0,183.0 289.0,180.0 295.0,175.0 301.0,170.5 308.0,167.0 316.5,164.5 316.5,179.5" fill="#7390b8" opacity="0.95" filter="url(#b1)"/><g clip-path="url(#cmL)"><rect x="194" y="135" width="130" height="90" filter="url(#cl)" opacity="0.4"/></g></g><g clip-path="url(#cpR)"><polygon points="316.5,179.5 316.5,164.5 323.0,168.0 330.0,172.5 334.0,178.0 338.0,184.0 344.0,189.0 350.0,193.0 358.0,197.0 367.0,201.0 377.0,201.0 382.0,198.0 387.0,195.0 391.0,200.0 395.5,205.5 400.0,211.0 404.0,217.0 404.5,232.0" fill="#6c8ab2" opacity="0.95" filter="url(#b1)"/><g clip-path="url(#cmR)"><rect x="309" y="155" width="110" height="80" filter="url(#cl)" opacity="0.35"/></g></g><path d="M316.5 128 V165" stroke="#e8f4ff" stroke-width="2.5" opacity="0.7" filter="url(#b1)"/><g><path d="M345 144 v7" stroke="#f08a18" stroke-width="2.4"/><path d="M343 146 h5" stroke="#d83010" stroke-width="1.4"/><circle cx="346" cy="149" r="1.3" fill="#ffe060"/></g></svg></div></div><div class="abs" style="left:158px;top:436px;width:584px;height:283px;border:1px solid;border-color:#a0a0a0 #fff #fff #a0a0a0"><div class="abs" style="left:0;top:0;width:582px;height:281px;border:1px solid;border-color:#696969 #e3e3e3 #e3e3e3 #696969;overflow:hidden"><svg class="abs" style="left:0;top:0" width="580" height="279" viewBox="0 0 580 279" shape-rendering="crispEdges"><rect width="580" height="279" fill="#fff"/><path d="M16.5 0V279M51.5 0V279M85.5 0V279M120.5 0V279M155.5 0V279M190.5 0V279M225.5 0V279M260.5 0V279M295.5 0V279M330.5 0V279M365.5 0V279M400.5 0V279M435.5 0V279M470.5 0V279M505.5 0V279M540.5 0V279M575.5 0V279" stroke="#e4fbfd" stroke-width="3" fill="none" transform="translate(1 0)"/><path d="M17.5 0V279M52.5 0V279M86.5 0V279M121.5 0V279M156.5 0V279M191.5 0V279M226.5 0V279M261.5 0V279M331.5 0V279M366.5 0V279M401.5 0V279M436.5 0V279M471.5 0V279M506.5 0V279M541.5 0V279M576.5 0V279" stroke="#3a8c97" stroke-width="1" stroke-dasharray="1 2" fill="none"/><path d="M0 25.5H580M0 94.5H580M0 129.5H580M0 164.5H580M0 199.5H580M0 234.5H580M0 269.5H580" stroke="#3a8c97" stroke-width="1" stroke-dasharray="4 3 5 2 4 3 4 3 5 3 2 2 1 2 1 1 1 2 5 4 4 3 5 3 4 3" fill="none"/><path d="M296.5 0V279M0 60.5H580" stroke="#3a919c" stroke-width="1" fill="none"/><g><polygon points="228.0,60.0 234.0,52.0 242.0,38.0 247.0,35.0 252.0,34.0 258.0,36.0 263.0,40.0 270.0,44.0 276.0,46.0 282.0,43.0 289.0,38.5 295.0,36.0 300.0,35.0 306.0,36.0 311.0,37.5 317.0,39.5 323.0,40.5 330.0,38.5 336.0,36.5 342.0,37.0 347.0,39.5 353.0,44.0 358.0,48.5 363.0,55.0 366.5,60.0" fill="#828282" shape-rendering="geometricPrecision"/><path d="M238 55.5h1M243 55.5h1M251 51.5h1M239 52.5h1M264 54.5h1M258 54.5h1M252 51.5h1M252 58.5h1M248 57.5h1M253 51.5h1M256 55.5h1M240 50.5h1M259 54.5h1M254 58.5h1M254 58.5h1M243 57.5h1M245 58.5h1M260 51.5h1M235 52.5h1M263 54.5h1M251 53.5h1M247 53.5h1M242 55.5h1M250 58.5h1M253 58.5h1M259 59.5h1M253 51.5h1M259 59.5h1M261 55.5h1M254 52.5h1M258 55.5h1M240 51.5h1M259 59.5h1M233 57.5h1M244 51.5h1M240 57.5h1M260 50.5h1M251 50.5h1M254 53.5h1M260 59.5h1M247 59.5h1M241 51.5h1M250 50.5h1M237 54.5h1M251 51.5h1M231 58.5h1M241 59.5h1M260 53.5h1M246 55.5h1M252 55.5h1M249 56.5h1M262 55.5h1M245 56.5h1M238 53.5h1M263 55.5h1M249 50.5h1M244 55.5h1M251 51.5h1M251 54.5h1M253 53.5h1M254 57.5h1M253 59.5h1M239 54.5h1M250 53.5h1M242 53.5h1M243 55.5h1M240 53.5h1M263 42.5h1M256 49.5h1M248 44.5h1M264 44.5h1M244 46.5h1M260 43.5h1M248 45.5h1M265 46.5h1M265 44.5h1M249 49.5h1M266 47.5h1M245 43.5h1M255 44.5h1M264 50.5h1M244 45.5h1M264 48.5h1M264 45.5h1M242 45.5h1M262 46.5h1M263 46.5h1M256 53.5h1M270 54.5h1M263 53.5h1M318 48.5h1M313 44.5h1M292 42.5h1M309 41.5h1M327 46.5h1M328 49.5h1M326 45.5h1M286 42.5h1M313 44.5h1M299 49.5h1M310 42.5h1M290 48.5h1M303 47.5h1M296 40.5h1M306 48.5h1M286 48.5h1M328 48.5h1M311 48.5h1M291 44.5h1M300 44.5h1M331 48.5h1M294 42.5h1M296 46.5h1M309 42.5h1M287 42.5h1M283 45.5h1M316 43.5h1M297 45.5h1M320 43.5h1M321 45.5h1M300 42.5h1M304 46.5h1M300 46.5h1M302 41.5h1M306 46.5h1M300 49.5h1M328 42.5h1M326 47.5h1M291 44.5h1M283 48.5h1M313 49.5h1M320 46.5h1M317 45.5h1M282 45.5h1M277 48.5h1M283 48.5h1M314 48.5h1M329 45.5h1M319 44.5h1M318 49.5h1M308 48.5h1M290 40.5h1M290 45.5h1M318 43.5h1M297 43.5h1M296 43.5h1M330 43.5h1M315 47.5h1M314 44.5h1M303 46.5h1M281 47.5h1M327 44.5h1M301 47.5h1M287 45.5h1M294 41.5h1M315 49.5h1M293 46.5h1M299 48.5h1M309 41.5h1M303 43.5h1M286 42.5h1M294 47.5h1M284 50.5h1M303 45.5h1M302 48.5h1M322 45.5h1M303 47.5h1M324 43.5h1M317 50.5h1M302 41.5h1M289 47.5h1M314 50.5h1M286 46.5h1M324 49.5h1M290 48.5h1M302 39.5h1M297 43.5h1M301 39.5h1M307 41.5h1M295 39.5h1M304 40.5h1M299 41.5h1M301 41.5h1M297 43.5h1M311 42.5h1M301 41.5h1M309 42.5h1M301 42.5h1M315 41.5h1M305 39.5h1M310 41.5h1M309 41.5h1M299 43.5h1M302 42.5h1M308 40.5h1M309 40.5h1M326 49.5h1M321 54.5h1M335 52.5h1M335 51.5h1M325 51.5h1M337 48.5h1M330 50.5h1M335 51.5h1M327 51.5h1M331 54.5h1M343 57.5h1M337 50.5h1M337 47.5h1M354 55.5h1M339 48.5h1M345 56.5h1M355 56.5h1M349 48.5h1M344 49.5h1M348 53.5h1M339 49.5h1M355 58.5h1M348 54.5h1M350 59.5h1M352 50.5h1M356 52.5h1M350 55.5h1M334 56.5h1M351 52.5h1M348 52.5h1M339 53.5h1M335 53.5h1M351 52.5h1M349 58.5h1M355 54.5h1M335 51.5h1M340 47.5h1M348 58.5h1M342 57.5h1M352 48.5h1M356 54.5h1M358 55.5h1M353 50.5h1M355 58.5h1M356 52.5h1M354 52.5h1M337 47.5h1M336 49.5h1M338 52.5h1M352 53.5h1M345 54.5h1M342 52.5h1" stroke="#fff" stroke-width="1"/></g><path d="M226.5 0 V60.5 H366.5 V0" fill="none" stroke="#c01818" stroke-width="1"/><rect x="226.5" y="164.5" width="140" height="72" fill="none" stroke="#303030" stroke-width="1"/><g shape-rendering="geometricPrecision"><path d="M233.5 167.5 L240 166.5" stroke="#c8401c" stroke-width="1.6"/><path d="M237 163.5 L237 170.5" stroke="#f4a420" stroke-width="2"/><circle cx="237" cy="167" r="1.2" fill="#ffd83c"/></g></svg></div></div><div class="abs" style="left:744px;top:436px;width:622px;height:283px;border:1px solid;border-color:#a0a0a0 #fff #fff #a0a0a0"><div class="abs" style="left:0;top:0;width:620px;height:281px;border:1px solid;border-color:#696969 #e3e3e3 #e3e3e3 #696969;overflow:hidden"><svg class="abs" style="left:0;top:0" width="618" height="279" viewBox="0 0 618 279" shape-rendering="crispEdges"><rect width="618" height="279" fill="#fff"/><path d="M11.5 0V279M48.5 0V279M86.5 0V279M123.5 0V279M160.5 0V279M198.5 0V279M235.5 0V279M272.5 0V279M310.5 0V279M347.5 0V279M384.5 0V279M422.5 0V279M459.5 0V279M496.5 0V279M534.5 0V279M571.5 0V279M608.5 0V279" stroke="#e4fbfd" stroke-width="3" fill="none" transform="translate(1 0)"/><path d="M12.5 0V279M49.5 0V279M87.5 0V279M124.5 0V279M161.5 0V279M199.5 0V279M236.5 0V279M273.5 0V279M348.5 0V279M385.5 0V279M423.5 0V279M460.5 0V279M497.5 0V279M535.5 0V279M572.5 0V279M609.5 0V279" stroke="#3a8c97" stroke-width="1" stroke-dasharray="1 1" fill="none"/><path d="M0 17.5H618M0 92.5H618M0 129.5H618M0 166.5H618M0 204.5H618M0 241.5H618M0 278.5H618" stroke="#3a8c97" stroke-width="1" stroke-dasharray="3 1 1 3 1 3 2 4 3 1 1 2 1 2 2 1 2 5 1 2 5 6 5 5 5 2 1 3 1 1 5 2 2 3 4 1 2 3 2 3" fill="none"/><path d="M311.5 0V279M0 54.5H618" stroke="#3a919c" stroke-width="1" fill="none"/><g><polygon points="237.0,54.5 241.0,46.0 246.0,38.0 252.0,31.5 258.0,28.5 264.0,27.0 269.0,26.5 275.0,27.3 281.0,29.0 288.0,33.0 296.0,37.5 303.0,36.0 310.0,34.0 317.0,35.5 324.0,37.0 333.0,34.5 342.0,32.0 349.0,30.3 355.0,29.5 360.0,30.5 365.0,33.5 370.0,38.0 374.5,42.5 380.0,49.0 385.0,54.5" fill="#828282" shape-rendering="geometricPrecision"/><path d="M254 42.5h1M265 41.5h1M261 45.5h1M244 47.5h1M243 46.5h1M257 51.5h1M246 43.5h1M265 52.5h1M263 45.5h1M277 41.5h1M273 44.5h1M247 42.5h1M253 51.5h1M249 48.5h1M265 45.5h1M262 41.5h1M244 43.5h1M266 46.5h1M253 48.5h1M258 44.5h1M271 49.5h1M251 47.5h1M261 51.5h1M268 44.5h1M277 42.5h1M257 50.5h1M247 46.5h1M243 49.5h1M270 47.5h1M274 44.5h1M267 48.5h1M263 46.5h1M272 52.5h1M259 49.5h1M244 49.5h1M265 53.5h1M272 44.5h1M256 49.5h1M243 46.5h1M248 42.5h1M244 50.5h1M247 43.5h1M256 51.5h1M245 46.5h1M262 51.5h1M271 51.5h1M252 45.5h1M255 51.5h1M276 42.5h1M248 43.5h1M250 46.5h1M263 43.5h1M255 47.5h1M276 49.5h1M261 48.5h1M266 41.5h1M274 50.5h1M273 50.5h1M256 45.5h1M246 48.5h1M250 42.5h1M254 41.5h1M246 45.5h1M243 51.5h1M264 42.5h1M251 45.5h1M255 42.5h1M273 53.5h1M259 46.5h1M254 43.5h1M272 42.5h1M243 52.5h1M261 42.5h1M262 40.5h1M261 53.5h1M273 49.5h1M251 45.5h1M248 50.5h1M261 50.5h1M254 43.5h1M271 53.5h1M273 50.5h1M271 50.5h1M250 47.5h1M255 40.5h1M251 49.5h1M276 46.5h1M276 53.5h1M276 45.5h1M250 43.5h1M249 43.5h1M264 52.5h1M272 46.5h1M266 50.5h1M245 49.5h1M275 50.5h1M269 46.5h1M248 50.5h1M254 50.5h1M277 45.5h1M256 52.5h1M268 42.5h1M247 42.5h1M275 50.5h1M263 42.5h1M293 39.5h1M271 38.5h1M263 30.5h1M293 39.5h1M277 43.5h1M274 42.5h1M267 34.5h1M267 38.5h1M267 36.5h1M263 43.5h1M271 36.5h1M279 43.5h1M273 43.5h1M276 37.5h1M277 30.5h1M274 33.5h1M258 41.5h1M264 37.5h1M284 38.5h1M270 37.5h1M278 41.5h1M262 38.5h1M267 34.5h1M309 48.5h1M302 50.5h1M313 47.5h1M304 48.5h1M300 50.5h1M298 48.5h1M299 52.5h1M306 52.5h1M314 45.5h1M302 52.5h1M311 44.5h1M288 47.5h1M286 45.5h1M286 49.5h1M309 52.5h1M289 50.5h1M305 44.5h1M312 53.5h1M291 52.5h1M297 47.5h1M316 51.5h1M289 47.5h1M300 46.5h1M290 46.5h1M307 42.5h1M302 47.5h1M285 46.5h1M304 48.5h1M286 53.5h1M309 53.5h1M287 45.5h1M285 51.5h1M293 43.5h1M298 52.5h1M310 45.5h1M310 47.5h1M327 44.5h1M308 37.5h1M332 41.5h1M307 47.5h1M329 46.5h1M307 46.5h1M307 46.5h1M322 40.5h1M326 47.5h1M315 38.5h1M325 39.5h1M308 38.5h1M306 38.5h1M316 40.5h1M334 39.5h1M333 43.5h1M312 42.5h1M341 37.5h1M337 41.5h1M324 46.5h1M320 42.5h1M332 48.5h1M318 46.5h1M332 44.5h1M320 40.5h1M306 38.5h1M307 45.5h1M314 38.5h1M307 46.5h1M339 44.5h1M315 39.5h1M316 42.5h1M310 41.5h1M315 48.5h1M343 43.5h1M314 48.5h1M316 40.5h1M304 41.5h1M323 42.5h1M312 42.5h1M304 39.5h1M343 42.5h1M341 34.5h1M351 38.5h1M362 44.5h1M368 46.5h1M367 51.5h1M354 40.5h1M367 46.5h1M341 50.5h1M374 46.5h1M368 49.5h1M344 44.5h1M359 50.5h1M370 50.5h1M362 51.5h1M366 47.5h1M348 35.5h1M344 41.5h1M343 50.5h1M361 46.5h1M363 47.5h1M358 34.5h1M370 48.5h1M359 44.5h1M368 39.5h1M342 39.5h1M367 38.5h1M368 53.5h1M358 41.5h1M358 47.5h1M369 46.5h1M364 35.5h1M345 39.5h1M368 40.5h1M361 34.5h1M341 39.5h1M365 47.5h1M365 40.5h1M359 43.5h1M357 36.5h1M377 52.5h1M340 43.5h1M371 52.5h1M357 39.5h1M347 52.5h1M347 45.5h1M345 44.5h1M371 44.5h1M374 47.5h1M348 51.5h1M358 34.5h1M339 43.5h1M357 40.5h1M344 41.5h1M351 50.5h1M339 48.5h1M375 48.5h1M354 41.5h1M353 42.5h1M350 35.5h1M343 50.5h1M350 52.5h1M349 39.5h1M359 38.5h1M354 52.5h1M373 49.5h1M364 51.5h1M368 43.5h1M368 46.5h1M350 35.5h1" stroke="#fff" stroke-width="1"/></g><path d="M236.5 0 V54.5 H385.5 V0" fill="none" stroke="#c01818" stroke-width="1"/><rect x="236.5" y="166.5" width="149" height="77" fill="none" stroke="#303030" stroke-width="1"/><g shape-rendering="geometricPrecision"><path d="M302.5 169.5 L309 168.5" stroke="#c8401c" stroke-width="1.6"/><path d="M306 165.5 L306 172.5" stroke="#f4a420" stroke-width="2"/><circle cx="306" cy="169" r="1.2" fill="#ffd83c"/></g></svg></div></div>
<div class="abs" style="left:86px;top:308px;width:104px;height:18px;background:#fff;border:1px solid #767676;box-shadow:2px 2px 3px rgba(0,0,0,0.35)"><span class="t" style="left:5px;top:2px;font-size:12px;color:#575757">Boolean property</span></div>
<div class="abs" style="left:0;top:719px;width:1366px;height:19px;background:#f0f0f0"></div>
<div class="t" style="left:2px;top:724px;font-size:12px;letter-spacing:-0.02px">Entity property representing boolean value</div>
<div class="abs" style="left:966px;top:724px;width:32px;height:12px;background:#0000ff"></div>
<div class="abs" style="left:1001px;top:721px;width:1px;height:16px;background:#d7d7d7"></div>
<div class="abs" style="left:1099px;top:721px;width:1px;height:16px;background:#d7d7d7"></div>
<div class="abs" style="left:1177px;top:721px;width:1px;height:16px;background:#d7d7d7"></div>
<div class="t" style="left:1006px;top:724px;font-size:12px">1 entities</div>
<div class="t" style="left:1104px;top:724px;font-size:12px">Grid: 16 m</div>
<div class="t" style="left:1182px;top:724px;font-size:12px;letter-spacing:-0.3px">X=-27.9375 Y=-48.7969 Z=2</div>
<div class="abs" style="left:0;top:738px;width:1366px;height:30px;background:#0e1114"></div><svg class="abs" style="left:0;top:738px" width="1366" height="30" viewBox="0 0 1366 30"><rect x="261" y="0" width="36" height="30" fill="#3c3f42"/><g fill="#fff"><polygon points="10,9.2 16.6,8.3 16.6,14.5 10,14.5"/><polygon points="17.6,8.1 26,7 26,14.5 17.6,14.5"/><polygon points="10,15.5 16.6,15.5 16.6,21.7 10,20.8"/><polygon points="17.6,15.5 26,15.5 26,23 17.6,21.9"/></g><rect x="49" y="7" width="15" height="15" fill="#7cb4e4" stroke="#b8d8f4" stroke-width="1"/><circle cx="56.5" cy="14.5" r="5.2" fill="#f08a18"/><polygon points="55,11.5 59.5,14.5 55,17.500" fill="#fff"/><path d="M85 9 h6 l1.5 2 h9.5 v11 h-17z" fill="#f4cf58"/><rect x="85" y="12.5" width="17" height="3.5" fill="#fbe59a"/><rect x="89" y="16" width="9" height="6" fill="#4aa0e8"/><rect x="91" y="18" width="5" height="4" fill="#f4cf58"/><circle cx="130.500" cy="14.5" r="8" fill="#e8e8e8"/><path d="M130.500 14.5 L123.600 10.500 A8 8 0 0 1 137.400 10.500 Z" fill="#e04a3c"/><path d="M130.500 14.5 L137.400 10.500 A8 8 0 0 1 130.500 22.5 Z" fill="#f8c830"/><path d="M130.500 14.5 L130.500 22.5 A8 8 0 0 1 123.600 10.500 Z" fill="#38a858"/><circle cx="130.500" cy="14.5" r="3.700" fill="#fff"/><circle cx="130.500" cy="14.5" r="2.900" fill="#4a8af0"/><rect x="160" y="7" width="13" height="15" fill="#e8ecf4" stroke="#9ab" stroke-width="0.8"/><rect x="162" y="9" width="8" height="6" fill="#3a6ac0"/><path d="M163 19 L173 10" stroke="#c02020" stroke-width="1.400"/><rect x="162" y="17" width="7" height="3" fill="#303848"/><circle cx="204.500" cy="14.5" r="8" fill="#1c3c60"/><circle cx="204.500" cy="14.5" r="8" fill="none" stroke="#a8c0d8" stroke-width="0.8"/><circle cx="207.500" cy="12" r="2.800" fill="none" stroke="#e8f0f8" stroke-width="1.300"/><circle cx="201" cy="17.500" r="2" fill="#e8f0f8"/><path d="M202.500 16.500 L206 13.500" stroke="#e8f0f8" stroke-width="1.600"/><polygon points="236,8 248,7 249,22 237,22.5" fill="#b8d4ec"/><path d="M238.500 11h8M238.500 13.500h8M238.500 16h8M238.500 18.500h8" stroke="#6890b8" stroke-width="0.9"/><path d="M236.500 7.500h12" stroke="#405878" stroke-width="1.600" stroke-dasharray="1 1"/><polygon points="279,5.500 280.800,7.600 283.300,6.600 283.900,9.200 286.600,9.400 285.900,12 288,13.800 285.900,15.600 286.800,18.200 284.100,18.500 283.500,21.200 280.900,20.300 279,22.500 277.100,20.300 274.500,21.200 273.900,18.500 271.200,18.200 272.100,15.600 270,13.800 272.100,12 271.400,9.400 274.100,9.200 274.700,6.600 277.200,7.600" fill="#f29a2e"/><circle cx="279" cy="14" r="6" fill="#ffe818"/><text x="275.700" y="17.200" font-family="Liberation Sans, sans-serif" font-size="9" font-weight="bold" fill="#6b5a10">G</text><circle cx="316" cy="14" r="4.300" fill="none" stroke="#f4d418" stroke-width="3"/><rect x="80" y="28" width="27" height="2" fill="#76b9ed"/><rect x="117" y="28" width="27" height="2" fill="#76b9ed"/><rect x="154" y="28" width="19" height="2" fill="#76b9ed"/><rect x="191" y="28" width="19" height="2" fill="#76b9ed"/><rect x="228" y="28" width="27" height="2" fill="#76b9ed"/><rect x="261" y="28" width="36" height="2" fill="#76b9ed"/><rect x="302" y="28" width="27" height="2" fill="#76b9ed"/><rect x="174" y="28" width="7" height="2" fill="#4a7ca8"/><rect x="211" y="28" width="7" height="2" fill="#4a7ca8"/><path d="M1256.500 17.500 L1262 12 L1267.500 17.500" fill="none" stroke="#fff" stroke-width="1.200"/><path d="M1325.500 8.500 h15 v10.500 h-5 l-2.500 2.500 l-2.500 -2.500 h-5z" fill="#fff"/><path d="M1328.500 11.500h9M1328.500 14h9M1328.500 16.500h6" stroke="#0e1114" stroke-width="0.9"/><rect x="1361" y="0" width="1" height="30" fill="#5a5e62"/></svg><div class="t" style="left:1280px;top:747px;font-size:12px;color:#fff;letter-spacing:-0.55px">14:21</div>
</div></body></html>
